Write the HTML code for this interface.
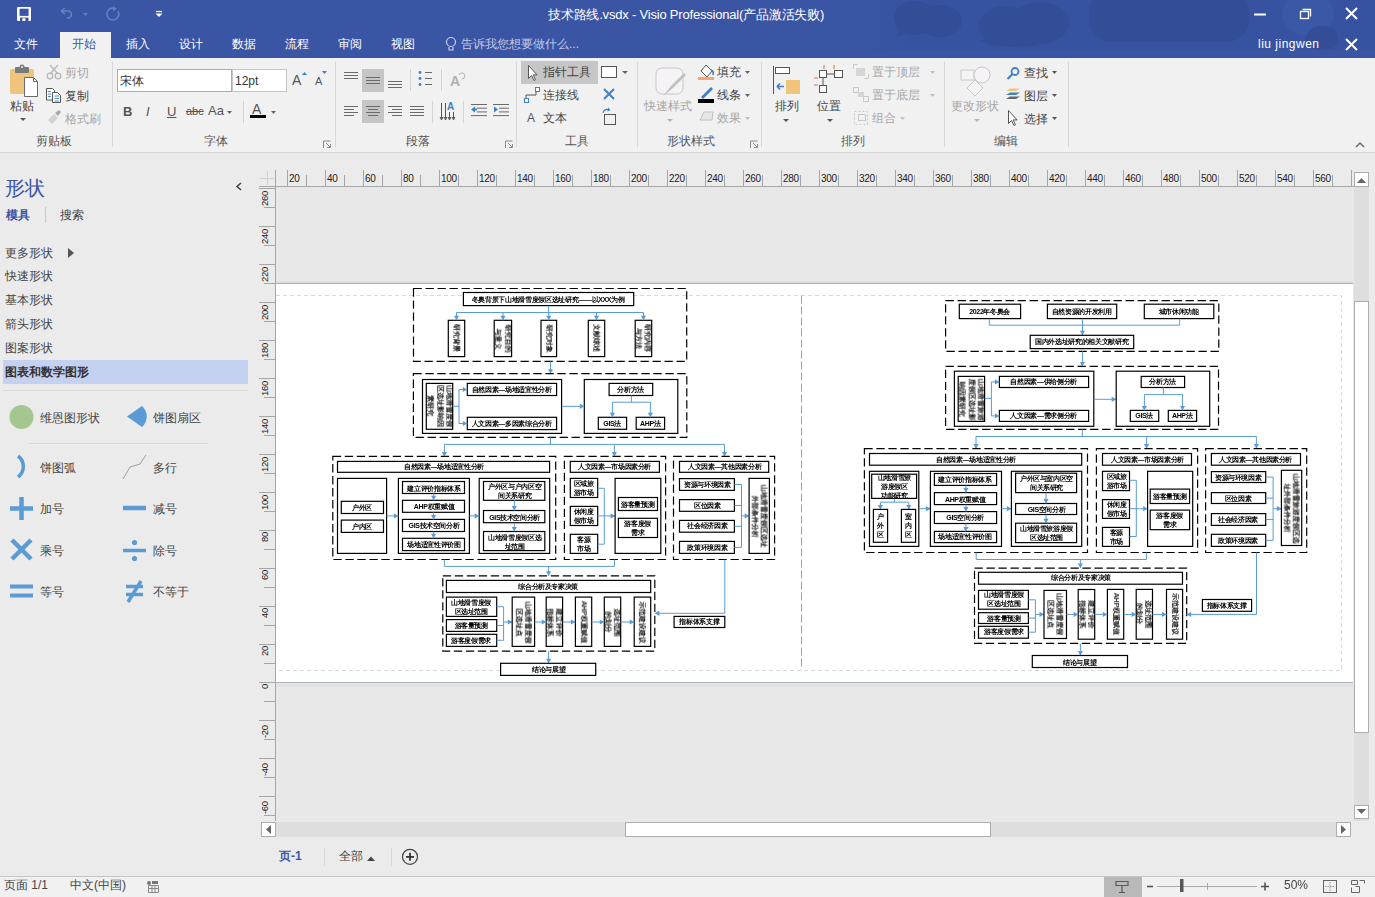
<!DOCTYPE html><html><head><meta charset="utf-8"><style>
html,body{margin:0;padding:0;width:1375px;height:897px;overflow:hidden;background:#ebebeb;font-family:"Liberation Sans", sans-serif;}
.t{position:absolute;white-space:nowrap;font-weight:500;}
.r{position:absolute;box-sizing:border-box;}
svg{position:absolute;overflow:visible;}

</style></head><body>
<div class="r" style="left:0px;top:0px;width:1375px;height:58px;background:#3a55a4"></div>
<svg style="left:0px;top:0px" width="1375" height="58" viewBox="0 0 1375 58"><defs><linearGradient id="cg" x1="0" x2="1" y1="0" y2="0"><stop offset="0" stop-color="#3752a0" stop-opacity="0"/><stop offset="0.12" stop-color="#3752a0" stop-opacity="1"/></linearGradient></defs><rect x="850" y="0" width="525" height="50" fill="url(#cg)"/><ellipse cx="915" cy="18" rx="21" ry="17" fill="#334e97"/><ellipse cx="940" cy="21" rx="22" ry="16" fill="#334e97"/><path d="M895 37 l8 -10 h20z" fill="#334e97"/><ellipse cx="1005" cy="26" rx="26" ry="20" fill="#334e97"/><ellipse cx="1040" cy="23" rx="29" ry="21" fill="#334e97"/><path d="M979 40 q20 10 60 6 l-30 -15z" fill="#334e97"/><rect x="1089" y="-10" width="160" height="52" rx="22" fill="#334e97"/><path d="M1190 42 q40 0 59 -16 l-40 0z" fill="#334e97"/><ellipse cx="1308" cy="14" rx="26" ry="22" fill="#3b58a7"/><ellipse cx="1322" cy="38" rx="16" ry="12" fill="#334e97"/></svg>
<svg style="left:0px;top:0px" width="1375" height="897" viewBox="0 0 1375 897"><rect x="17" y="7" width="14" height="14" rx="1.2" fill="#fff"/><rect x="19.6" y="8.7" width="9" height="7.2" fill="#3a55a4"/><rect x="20" y="17.6" width="8.5" height="3.4" fill="#3a55a4"/><rect x="22.4" y="18.2" width="3" height="2.8" fill="#fff"/><path d="M61 11 l4 -3 M61 11 l4 3 M61 11 h7 a3.5 3.5 0 0 1 0 7 h-1" fill="none" stroke="#6b80bf" stroke-width="1.5"/><path d="M83 13 h5 l-2.5 3z" fill="#6b80bf"/><path d="M113 8 a6 6 0 1 0 5 3" fill="none" stroke="#6b80bf" stroke-width="1.5"/><path d="M113 6 l0 5 l4 -2z" fill="#6b80bf"/><path d="M156 11.5 h6" stroke="#fff" stroke-width="1.2"/><path d="M155.5 13.5 h7 l-3.5 3.5z" fill="#fff"/></svg>
<div class="t" style="left:548px;top:7px;font-size:13px;line-height:15px;color:#fff;letter-spacing:-0.2px">技术路线.vsdx - Visio Professional(产品激活失败)</div>
<svg style="left:0px;top:0px" width="1375" height="897" viewBox="0 0 1375 897"><path d="M1254 14.5 h12" stroke="#fff" stroke-width="2"/><rect x="1300.5" y="11.5" width="8" height="7" fill="none" stroke="#fff" stroke-width="1.3"/><path d="M1302.5 9.5 h8 v7" fill="none" stroke="#fff" stroke-width="1.3"/><path d="M1346 8 l11 11 M1357 8 l-11 11" stroke="#fff" stroke-width="2"/><path d="M1346 39 l11 11 M1357 39 l-11 11" stroke="#fff" stroke-width="2"/><circle cx="451" cy="42" r="4.5" fill="none" stroke="#c9d1ea" stroke-width="1.2"/><path d="M449 47 v3 h4 v-3" fill="none" stroke="#c9d1ea" stroke-width="1.2"/></svg>
<div class="r" style="left:60px;top:32px;width:51px;height:26px;background:#f1f1f1"></div>
<div class="t" style="left:14px;top:37px;font-size:12px;line-height:14px;color:#fff;">文件</div>
<div class="t" style="left:72px;top:37px;font-size:12px;line-height:14px;color:#3a55a4;">开始</div>
<div class="t" style="left:126px;top:37px;font-size:12px;line-height:14px;color:#fff;">插入</div>
<div class="t" style="left:179px;top:37px;font-size:12px;line-height:14px;color:#fff;">设计</div>
<div class="t" style="left:232px;top:37px;font-size:12px;line-height:14px;color:#fff;">数据</div>
<div class="t" style="left:285px;top:37px;font-size:12px;line-height:14px;color:#fff;">流程</div>
<div class="t" style="left:338px;top:37px;font-size:12px;line-height:14px;color:#fff;">审阅</div>
<div class="t" style="left:391px;top:37px;font-size:12px;line-height:14px;color:#fff;">视图</div>
<div class="t" style="left:461px;top:37px;font-size:12px;line-height:14px;color:#c3cbe6;">告诉我您想要做什么...</div>
<div class="t" style="left:1258px;top:37px;font-size:12px;line-height:14px;color:#fff;letter-spacing:0.5px">liu jingwen</div>
<div class="r" style="left:0px;top:58px;width:1375px;height:95px;background:#f1f1f1;border-bottom:1px solid #d5d5d5"></div>
<svg style="left:0px;top:0px" width="1375" height="897" viewBox="0 0 1375 897"><path d="M112.5 62 v85" stroke="#d8d8d8" stroke-width="1"/><path d="M335.5 62 v85" stroke="#d8d8d8" stroke-width="1"/><path d="M516.5 62 v85" stroke="#d8d8d8" stroke-width="1"/><path d="M637.5 62 v85" stroke="#d8d8d8" stroke-width="1"/><path d="M761.5 62 v85" stroke="#d8d8d8" stroke-width="1"/><path d="M944.5 62 v85" stroke="#d8d8d8" stroke-width="1"/><path d="M1068.5 62 v85" stroke="#d8d8d8" stroke-width="1"/><path d="M323.5 148 v-7 h7" fill="none" stroke="#8a8a8a" stroke-width="1"/><path d="M326 143 l4 4 M330.5 144 v3.5 h-3.5" fill="none" stroke="#8a8a8a" stroke-width="1"/><path d="M505.5 148 v-7 h7" fill="none" stroke="#8a8a8a" stroke-width="1"/><path d="M508 143 l4 4 M512.5 144 v3.5 h-3.5" fill="none" stroke="#8a8a8a" stroke-width="1"/><path d="M750.5 148 v-7 h7" fill="none" stroke="#8a8a8a" stroke-width="1"/><path d="M753 143 l4 4 M757.5 144 v3.5 h-3.5" fill="none" stroke="#8a8a8a" stroke-width="1"/><path d="M1356 147 l4 -4 l4 4" fill="none" stroke="#666" stroke-width="1.4"/><rect x="10" y="69" width="24" height="25" rx="2" fill="#eec57a"/><rect x="15" y="67" width="14" height="6" rx="1" fill="#7a7a7a"/><circle cx="22" cy="67" r="2.5" fill="#7a7a7a"/><circle cx="22" cy="67" r="1" fill="#f1f1f1"/><path d="M24.5 77.5 h9 l4 4 v15 h-13z" fill="#fff" stroke="#6a6a6a" stroke-width="1"/><path d="M33.5 77.5 v4 h4" fill="none" stroke="#6a6a6a" stroke-width="1"/><path d="M20 118 h6 l-3 3z" fill="#555"/><path d="M50 65 l8 9 M58 65 l-8 9" stroke="#b8b8b8" stroke-width="1.3"/><circle cx="50" cy="76" r="2.8" fill="none" stroke="#b8b8b8" stroke-width="1.3"/><circle cx="58" cy="76" r="2.8" fill="none" stroke="#b8b8b8" stroke-width="1.3"/><path d="M46.5 88.5 h6 l2 2 v9.5 h-8z" fill="#fff" stroke="#555" stroke-width="1"/><path d="M52.5 92.5 h5 l3 3 v7 h-8z" fill="#fff" stroke="#555" stroke-width="1"/><path d="M48 91.5 h3 M48 94 h3 M48 96.5 h3 M54.5 96 h4.5 M54.5 98.5 h4.5 M54.5 101 h4.5" stroke="#3f7fc5" stroke-width="0.9"/><path d="M48 120 l6 -6 l4 4 l-6 6z" fill="#d2d2d2"/><path d="M55 113 l4 -3 l2 2 l-3 4z" fill="#a8a8a8"/><path d="M221 80 h6 l-3 3z" fill="#444"/><path d="M276 80 h6 l-3 3z" fill="#777"/><path d="M302 75 l2.5 -3 l2.5 3z" fill="#3f7fc5"/><path d="M322 71 h5 l-2.5 3z" fill="#3f7fc5"/><path d="M227 111 h5 l-2.5 3z" fill="#666"/><path d="M243.5 101 v22" stroke="#d5d5d5"/><rect x="250" y="115" width="16" height="3" fill="#000"/><path d="M271 111 h5 l-2.5 3z" fill="#666"/><rect x="362" y="69" width="22" height="23" fill="#c5c5c5"/><rect x="362" y="100" width="22" height="23" fill="#c5c5c5"/><path d="M344 72.5 h14" stroke="#6a6a6a" stroke-width="1"/><path d="M344 75.5 h14" stroke="#6a6a6a" stroke-width="1"/><path d="M344 78.5 h14" stroke="#6a6a6a" stroke-width="1"/><path d="M366 77.5 h14" stroke="#6a6a6a" stroke-width="1"/><path d="M366 80.5 h14" stroke="#6a6a6a" stroke-width="1"/><path d="M366 83.5 h14" stroke="#6a6a6a" stroke-width="1"/><path d="M388 81.5 h14" stroke="#6a6a6a" stroke-width="1"/><path d="M388 84.5 h14" stroke="#6a6a6a" stroke-width="1"/><path d="M388 87.5 h14" stroke="#6a6a6a" stroke-width="1"/><path d="M410.5 69 v22 M441.5 69 v22 M432.5 101 v22 M463.5 101 v22" stroke="#d5d5d5"/><circle cx="420" cy="72.5" r="1.4" fill="#3f7fc5"/><circle cx="420" cy="78.5" r="1.4" fill="#3f7fc5"/><circle cx="420" cy="84.5" r="1.4" fill="#3f7fc5"/><path d="M425 72.5 h7" stroke="#6a6a6a" stroke-width="1"/><path d="M425 78.5 h7" stroke="#6a6a6a" stroke-width="1"/><path d="M425 84.5 h7" stroke="#6a6a6a" stroke-width="1"/><path d="M459 75 a3 3 0 1 1 3 4" fill="none" stroke="#b0b0b0" stroke-width="1"/><path d="M344 106.5 h14" stroke="#6a6a6a" stroke-width="1"/><path d="M344 109.5 h10" stroke="#6a6a6a" stroke-width="1"/><path d="M344 112.5 h14" stroke="#6a6a6a" stroke-width="1"/><path d="M344 115.5 h10" stroke="#6a6a6a" stroke-width="1"/><path d="M366 106.5 h14" stroke="#6a6a6a" stroke-width="1"/><path d="M368 109.5 h10" stroke="#6a6a6a" stroke-width="1"/><path d="M366 112.5 h14" stroke="#6a6a6a" stroke-width="1"/><path d="M368 115.5 h10" stroke="#6a6a6a" stroke-width="1"/><path d="M388 106.5 h14" stroke="#6a6a6a" stroke-width="1"/><path d="M392 109.5 h10" stroke="#6a6a6a" stroke-width="1"/><path d="M388 112.5 h14" stroke="#6a6a6a" stroke-width="1"/><path d="M392 115.5 h10" stroke="#6a6a6a" stroke-width="1"/><path d="M410 106.5 h14" stroke="#6a6a6a" stroke-width="1"/><path d="M410 109.5 h14" stroke="#6a6a6a" stroke-width="1"/><path d="M410 112.5 h14" stroke="#6a6a6a" stroke-width="1"/><path d="M410 115.5 h14" stroke="#6a6a6a" stroke-width="1"/><path d="M441.5 103 v16 M445.5 103 v16 M449.5 112 v7 M453.5 112 v7" stroke="#555" stroke-width="1"/><path d="M440 117 l1.5 3 l1.5 -3 M444 117 l1.5 3 l1.5 -3 M448 117 l1.5 3 l1.5 -3 M452 117 l1.5 3 l1.5 -3" fill="#555" stroke="#555" stroke-width=".8"/><path d="M471 104.5 h16" stroke="#6a6a6a" stroke-width="1"/><path d="M477 108.2 h10" stroke="#6a6a6a" stroke-width="1"/><path d="M477 111.9 h10" stroke="#6a6a6a" stroke-width="1"/><path d="M471 115.6 h16" stroke="#6a6a6a" stroke-width="1"/><path d="M471 109.5 l4 -3 v6z" fill="#3f7fc5"/><path d="M473 109.5 h4" stroke="#3f7fc5" stroke-width="2"/><path d="M493 104.5 h16" stroke="#6a6a6a" stroke-width="1"/><path d="M499 108.2 h10" stroke="#6a6a6a" stroke-width="1"/><path d="M499 111.9 h10" stroke="#6a6a6a" stroke-width="1"/><path d="M493 115.6 h16" stroke="#6a6a6a" stroke-width="1"/><path d="M498 109.5 l-4 -3 v6z" fill="#3f7fc5"/><path d="M494 109.5 h2" stroke="#3f7fc5" stroke-width="2"/><rect x="521" y="61" width="77" height="23" fill="#c6c6c6"/><path d="M528.5 65.5 v13 l3 -3 l2.5 5 l1.5 -.8 l-2.4 -4.8 h4z" fill="#fff" stroke="#555" stroke-width="1"/><rect x="601.5" y="66.5" width="15" height="11" fill="#fff" stroke="#555" stroke-width="1"/><path d="M622 71 h6 l-3 3z" fill="#666"/><path d="M526 100 v-5 h10 v-5" fill="none" stroke="#555" stroke-width="1"/><rect x="524.5" y="98.5" width="4" height="4" fill="#fff" stroke="#3f7fc5"/><rect x="535.5" y="87.5" width="4" height="4" fill="#fff" stroke="#3f7fc5"/><path d="M604 89 l10 10 M614 89 l-10 10" stroke="#3f7fc5" stroke-width="2"/><rect x="604.5" y="114.5" width="11" height="10" fill="none" stroke="#555" stroke-width="1"/><path d="M603 113 a4 4 0 0 1 6 -3" fill="none" stroke="#3f7fc5" stroke-width="1.2"/><path d="M608 107.5 l2.5 2.5 l-3 1.5z" fill="#3f7fc5"/><rect x="656" y="68" width="27" height="26" rx="6" fill="#f6f3f6" stroke="#c8c8c8" stroke-width="1"/><path d="M663 96 l8 -10 l13 -13 l2 2 l-13 13z" fill="#c0c0c0"/><path d="M667 119 h6 l-3 3z" fill="#b5b5b5"/><path d="M701 71 l5 -6 l6 6 l-5 6z" fill="#fff" stroke="#555" stroke-width="1"/><path d="M711 70 q3 1 2 5" fill="none" stroke="#3f7fc5" stroke-width="1.6"/><rect x="698" y="77" width="16" height="3" fill="#f4a66e"/><path d="M745 71 h5 l-2.5 3z" fill="#666"/><path d="M701 97 l10 -10 l2 2 l-10 10z" fill="#3f7fc5"/><rect x="698" y="99" width="16" height="4" fill="#000"/><path d="M745 94 h5 l-2.5 3z" fill="#666"/><path d="M700 120 l4 -8 h9 l-1 8z" fill="#e6e6e6" stroke="#c0c0c0" stroke-width="1"/><path d="M745 117 h5 l-2.5 3z" fill="#bbb"/><path d="M773.5 66 v28" stroke="#555" stroke-width="1"/><rect x="775.5" y="67.5" width="14" height="6" fill="#fff" stroke="#555"/><rect x="786" y="80" width="14" height="14" fill="#eec57a"/><path d="M777 86.5 h7 M777 86.5 l3 -3 M777 86.5 l3 3" fill="none" stroke="#3f7fc5" stroke-width="1.6"/><path d="M783 119 h6 l-3 3z" fill="#555"/><rect x="819.5" y="70.5" width="7" height="7" fill="#fff" stroke="#555"/><rect x="834.5" y="70.5" width="8" height="7" fill="#fff" stroke="#555"/><rect x="819.5" y="85.5" width="7" height="7" fill="#fff" stroke="#555"/><path d="M827 74 h7 M823 78 v7" stroke="#555"/><path d="M824 65 v4 M834 65 v4 M814 78 h4 M814 85 h4" stroke="#e06a3a" stroke-width="1"/><path d="M827 119 h6 l-3 3z" fill="#555"/><path d="M853.5 69 v-4.5 h4 M868.5 74 v4.5 h-4" fill="none" stroke="#c8c8c8"/><rect x="856" y="68" width="9" height="8" fill="#d6d6d6"/><path d="M930 71 h5 l-2.5 3z" fill="#c0c0c0"/><rect x="853.5" y="87.5" width="5" height="5" fill="none" stroke="#c8c8c8"/><rect x="858" y="92" width="6" height="5" fill="#d6d6d6"/><rect x="863.5" y="96.5" width="5" height="5" fill="none" stroke="#c8c8c8"/><path d="M930 94 h5 l-2.5 3z" fill="#c0c0c0"/><rect x="854.5" y="111.5" width="13" height="13" fill="none" stroke="#c8c8c8" stroke-dasharray="2 2"/><rect x="858.5" y="114.5" width="7" height="6" fill="none" stroke="#c8c8c8"/><path d="M900 117 h5 l-2.5 3z" fill="#c0c0c0"/><path d="M961 70 h13 v10 h-13z" fill="#f6f3f6" stroke="#c8c8c8"/><circle cx="982" cy="75" r="8" fill="#f6f3f6" stroke="#c8c8c8"/><path d="M975 80 l8 8 l-8 8 l-8 -8z" fill="#f6f3f6" stroke="#c8c8c8"/><path d="M974 119 h6 l-3 3z" fill="#b5b5b5"/><circle cx="1015" cy="71.5" r="3.5" fill="none" stroke="#3f7fc5" stroke-width="1.8"/><path d="M1012.5 74 l-5 5" stroke="#3f7fc5" stroke-width="2.2"/><path d="M1052 71 h5 l-2.5 3z" fill="#555"/><path d="M1006 91 l4 -2.5 h10 l-4 2.5z" fill="#eec57a"/><path d="M1006 95 l4 -2.5 h10 l-4 2.5z" fill="#3f7fc5"/><path d="M1006 99 l4 -2.5 h10 l-4 2.5z" fill="#666"/><path d="M1052 94 h5 l-2.5 3z" fill="#555"/><path d="M1008.5 110.5 v13 l3 -3 l2.5 5 l1.5 -.8 l-2.4 -4.8 h4z" fill="#fff" stroke="#555" stroke-width="1"/><path d="M1052 117 h5 l-2.5 3z" fill="#555"/></svg>
<div class="t" style="left:36px;top:134px;font-size:12px;line-height:14px;color:#555;">剪贴板</div>
<div class="t" style="left:204px;top:134px;font-size:12px;line-height:14px;color:#555;">字体</div>
<div class="t" style="left:406px;top:134px;font-size:12px;line-height:14px;color:#555;">段落</div>
<div class="t" style="left:565px;top:134px;font-size:12px;line-height:14px;color:#555;">工具</div>
<div class="t" style="left:667px;top:134px;font-size:12px;line-height:14px;color:#555;">形状样式</div>
<div class="t" style="left:841px;top:134px;font-size:12px;line-height:14px;color:#555;">排列</div>
<div class="t" style="left:994px;top:134px;font-size:12px;line-height:14px;color:#555;">编辑</div>
<div class="t" style="left:10px;top:99px;font-size:12px;line-height:14px;color:#444;">粘贴</div>
<div class="t" style="left:65px;top:66px;font-size:12px;line-height:14px;color:#a6a6a6;">剪切</div>
<div class="t" style="left:65px;top:89px;font-size:12px;line-height:14px;color:#444;">复制</div>
<div class="t" style="left:65px;top:112px;font-size:12px;line-height:14px;color:#a6a6a6;">格式刷</div>
<div class="r" style="left:117px;top:69px;width:115px;height:23px;background:#fff;border:1px solid #ababab"></div>
<div class="r" style="left:232px;top:69px;width:55px;height:23px;background:#fff;border:1px solid #c6c6c6"></div>
<div class="t" style="left:120px;top:74px;font-size:12px;line-height:14px;color:#333;">宋体</div>
<div class="t" style="left:235px;top:74px;font-size:12px;line-height:14px;color:#333;">12pt</div>
<div class="t" style="left:292px;top:72px;font-size:14px;line-height:16px;color:#555;">A</div>
<div class="t" style="left:315px;top:75px;font-size:11px;line-height:13px;color:#555;">A</div>
<div class="t" style="left:123px;top:104px;font-size:13px;line-height:15px;color:#555;"><b>B</b></div>
<div class="t" style="left:146px;top:104px;font-size:13px;line-height:15px;color:#555;font-family:"Liberation Serif",serif"><i>I</i></div>
<div class="t" style="left:167px;top:104px;font-size:13px;line-height:15px;color:#555;"><u>U</u></div>
<div class="t" style="left:186px;top:105px;font-size:11px;line-height:13px;color:#555;"><s>abc</s></div>
<div class="t" style="left:208px;top:103px;font-size:13px;line-height:15px;color:#555;">Aa</div>
<div class="t" style="left:252px;top:101px;font-size:14px;line-height:16px;color:#555;">A</div>
<div class="t" style="left:450px;top:73px;font-size:14px;line-height:16px;color:#b0b0b0;"><b>A</b></div>
<div class="t" style="left:447px;top:101px;font-size:10px;line-height:12px;color:#3f7fc5;"><b>A</b></div>
<div class="t" style="left:543px;top:65px;font-size:12px;line-height:14px;color:#444;">指针工具</div>
<div class="t" style="left:543px;top:88px;font-size:12px;line-height:14px;color:#444;">连接线</div>
<div class="t" style="left:527px;top:111px;font-size:12px;line-height:14px;color:#555;">A</div>
<div class="t" style="left:543px;top:111px;font-size:12px;line-height:14px;color:#444;">文本</div>
<div class="t" style="left:644px;top:99px;font-size:12px;line-height:14px;color:#a6a6a6;">快速样式</div>
<div class="t" style="left:717px;top:65px;font-size:12px;line-height:14px;color:#444;">填充</div>
<div class="t" style="left:717px;top:88px;font-size:12px;line-height:14px;color:#444;">线条</div>
<div class="t" style="left:717px;top:111px;font-size:12px;line-height:14px;color:#a6a6a6;">效果</div>
<div class="t" style="left:775px;top:99px;font-size:12px;line-height:14px;color:#444;">排列</div>
<div class="t" style="left:817px;top:99px;font-size:12px;line-height:14px;color:#444;">位置</div>
<div class="t" style="left:872px;top:65px;font-size:12px;line-height:14px;color:#a6a6a6;">置于顶层</div>
<div class="t" style="left:872px;top:88px;font-size:12px;line-height:14px;color:#a6a6a6;">置于底层</div>
<div class="t" style="left:872px;top:111px;font-size:12px;line-height:14px;color:#a6a6a6;">组合</div>
<div class="t" style="left:951px;top:99px;font-size:12px;line-height:14px;color:#a6a6a6;">更改形状</div>
<div class="t" style="left:1024px;top:66px;font-size:12px;line-height:14px;color:#444;">查找</div>
<div class="t" style="left:1024px;top:89px;font-size:12px;line-height:14px;color:#444;">图层</div>
<div class="t" style="left:1024px;top:112px;font-size:12px;line-height:14px;color:#444;">选择</div>
<div class="t" style="left:5px;top:177px;font-size:20px;line-height:22px;color:#3a55a4;">形状</div>
<svg style="left:0px;top:0px" width="1375" height="897" viewBox="0 0 1375 897"><path d="M241 183 l-4 3.5 l4 3.5" fill="none" stroke="#444" stroke-width="1.6"/><path d="M45.5 207 v16" stroke="#c8c8c8"/><path d="M68 248 l6 5 l-6 5z" fill="#555"/><path d="M3 390.5 h245" stroke="#dcdcdc"/><path d="M29 443.5 h179" stroke="#d9d9d9"/></svg>
<div class="t" style="left:6px;top:208px;font-size:12px;line-height:14px;color:#3a55a4;"><b>模具</b></div>
<div class="t" style="left:60px;top:208px;font-size:12px;line-height:14px;color:#444;">搜索</div>
<div class="t" style="left:5px;top:246px;font-size:12px;line-height:14px;color:#444;">更多形状</div>
<div class="t" style="left:5px;top:269px;font-size:12px;line-height:14px;color:#444;">快速形状</div>
<div class="t" style="left:5px;top:293px;font-size:12px;line-height:14px;color:#444;">基本形状</div>
<div class="t" style="left:5px;top:317px;font-size:12px;line-height:14px;color:#444;">箭头形状</div>
<div class="t" style="left:5px;top:341px;font-size:12px;line-height:14px;color:#444;">图案形状</div>
<div class="r" style="left:3px;top:360px;width:245px;height:24px;background:#c5d1f1"></div>
<div class="t" style="left:5px;top:365px;font-size:12px;line-height:14px;color:#333;"><b>图表和数学图形</b></div>
<svg style="left:0px;top:0px" width="1375" height="897" viewBox="0 0 1375 897"><circle cx="21.5" cy="417" r="12" fill="#a5c78f"/><path d="M142 406 a14 14 0 0 1 0 21 l-15 -10.5z" fill="#5b9bd5"/><path d="M18 456 a13 13 0 0 1 0 21" fill="none" stroke="#5b9bd5" stroke-width="3.5"/><path d="M123 479 l7 -12 l10 -3 l6 -9" fill="none" stroke="#a0a0a0" stroke-width="1"/><path d="M10 508.5 h23 M21.5 497 v23" stroke="#5b9bd5" stroke-width="4.5"/><path d="M123 508 h23" stroke="#5b9bd5" stroke-width="4.5"/><path d="M12 540 l19 19 M31 540 l-19 19" stroke="#5b9bd5" stroke-width="4.5"/><path d="M123 550.5 h23" stroke="#5b9bd5" stroke-width="3.5"/><circle cx="134.5" cy="542.5" r="2.6" fill="#5b9bd5"/><circle cx="134.5" cy="558.5" r="2.6" fill="#5b9bd5"/><path d="M10 586.5 h23 M10 595.5 h23" stroke="#5b9bd5" stroke-width="4"/><path d="M126 586.5 h17 M126 594.5 h17" stroke="#5b9bd5" stroke-width="3.5"/><path d="M141 581 l-13 21" stroke="#5b9bd5" stroke-width="3.5"/></svg>
<div class="t" style="left:40px;top:411px;font-size:12px;line-height:14px;color:#444;">维恩图形状</div>
<div class="t" style="left:153px;top:411px;font-size:12px;line-height:14px;color:#444;">饼图扇区</div>
<div class="t" style="left:40px;top:461px;font-size:12px;line-height:14px;color:#444;">饼图弧</div>
<div class="t" style="left:153px;top:461px;font-size:12px;line-height:14px;color:#444;">多行</div>
<div class="t" style="left:40px;top:502px;font-size:12px;line-height:14px;color:#444;">加号</div>
<div class="t" style="left:153px;top:502px;font-size:12px;line-height:14px;color:#444;">减号</div>
<div class="t" style="left:40px;top:544px;font-size:12px;line-height:14px;color:#444;">乘号</div>
<div class="t" style="left:153px;top:544px;font-size:12px;line-height:14px;color:#444;">除号</div>
<div class="t" style="left:40px;top:585px;font-size:12px;line-height:14px;color:#444;">等号</div>
<div class="t" style="left:153px;top:585px;font-size:12px;line-height:14px;color:#444;">不等于</div>
<div class="r" style="left:276px;top:187px;width:1078px;height:634px;background:#e8e8e8"></div>
<div class="r" style="left:276px;top:283px;width:1077px;height:400px;background:#fff"></div>
<div class="t" style="left:289px;top:174px;font-size:10px;line-height:12px;color:#222;line-height:10px;letter-spacing:-0.3px">20</div>
<div class="t" style="left:327px;top:174px;font-size:10px;line-height:12px;color:#222;line-height:10px;letter-spacing:-0.3px">40</div>
<div class="t" style="left:365px;top:174px;font-size:10px;line-height:12px;color:#222;line-height:10px;letter-spacing:-0.3px">60</div>
<div class="t" style="left:403px;top:174px;font-size:10px;line-height:12px;color:#222;line-height:10px;letter-spacing:-0.3px">80</div>
<div class="t" style="left:441px;top:174px;font-size:10px;line-height:12px;color:#222;line-height:10px;letter-spacing:-0.3px">100</div>
<div class="t" style="left:479px;top:174px;font-size:10px;line-height:12px;color:#222;line-height:10px;letter-spacing:-0.3px">120</div>
<div class="t" style="left:517px;top:174px;font-size:10px;line-height:12px;color:#222;line-height:10px;letter-spacing:-0.3px">140</div>
<div class="t" style="left:555px;top:174px;font-size:10px;line-height:12px;color:#222;line-height:10px;letter-spacing:-0.3px">160</div>
<div class="t" style="left:593px;top:174px;font-size:10px;line-height:12px;color:#222;line-height:10px;letter-spacing:-0.3px">180</div>
<div class="t" style="left:631px;top:174px;font-size:10px;line-height:12px;color:#222;line-height:10px;letter-spacing:-0.3px">200</div>
<div class="t" style="left:669px;top:174px;font-size:10px;line-height:12px;color:#222;line-height:10px;letter-spacing:-0.3px">220</div>
<div class="t" style="left:707px;top:174px;font-size:10px;line-height:12px;color:#222;line-height:10px;letter-spacing:-0.3px">240</div>
<div class="t" style="left:745px;top:174px;font-size:10px;line-height:12px;color:#222;line-height:10px;letter-spacing:-0.3px">260</div>
<div class="t" style="left:783px;top:174px;font-size:10px;line-height:12px;color:#222;line-height:10px;letter-spacing:-0.3px">280</div>
<div class="t" style="left:821px;top:174px;font-size:10px;line-height:12px;color:#222;line-height:10px;letter-spacing:-0.3px">300</div>
<div class="t" style="left:859px;top:174px;font-size:10px;line-height:12px;color:#222;line-height:10px;letter-spacing:-0.3px">320</div>
<div class="t" style="left:897px;top:174px;font-size:10px;line-height:12px;color:#222;line-height:10px;letter-spacing:-0.3px">340</div>
<div class="t" style="left:935px;top:174px;font-size:10px;line-height:12px;color:#222;line-height:10px;letter-spacing:-0.3px">360</div>
<div class="t" style="left:973px;top:174px;font-size:10px;line-height:12px;color:#222;line-height:10px;letter-spacing:-0.3px">380</div>
<div class="t" style="left:1011px;top:174px;font-size:10px;line-height:12px;color:#222;line-height:10px;letter-spacing:-0.3px">400</div>
<div class="t" style="left:1049px;top:174px;font-size:10px;line-height:12px;color:#222;line-height:10px;letter-spacing:-0.3px">420</div>
<div class="t" style="left:1087px;top:174px;font-size:10px;line-height:12px;color:#222;line-height:10px;letter-spacing:-0.3px">440</div>
<div class="t" style="left:1125px;top:174px;font-size:10px;line-height:12px;color:#222;line-height:10px;letter-spacing:-0.3px">460</div>
<div class="t" style="left:1163px;top:174px;font-size:10px;line-height:12px;color:#222;line-height:10px;letter-spacing:-0.3px">480</div>
<div class="t" style="left:1201px;top:174px;font-size:10px;line-height:12px;color:#222;line-height:10px;letter-spacing:-0.3px">500</div>
<div class="t" style="left:1239px;top:174px;font-size:10px;line-height:12px;color:#222;line-height:10px;letter-spacing:-0.3px">520</div>
<div class="t" style="left:1277px;top:174px;font-size:10px;line-height:12px;color:#222;line-height:10px;letter-spacing:-0.3px">540</div>
<div class="t" style="left:1315px;top:174px;font-size:10px;line-height:12px;color:#222;line-height:10px;letter-spacing:-0.3px">560</div>
<div class="t" style="left:260px;top:797px;width:9px;height:17px;font-size:9.5px;line-height:10px;color:#222;"><div style="position:absolute;left:0;top:17px;transform-origin:0 0;transform:rotate(-90deg);letter-spacing:-0.3px">-60</div></div>
<div class="t" style="left:260px;top:759px;width:9px;height:17px;font-size:9.5px;line-height:10px;color:#222;"><div style="position:absolute;left:0;top:17px;transform-origin:0 0;transform:rotate(-90deg);letter-spacing:-0.3px">-40</div></div>
<div class="t" style="left:260px;top:721px;width:9px;height:17px;font-size:9.5px;line-height:10px;color:#222;"><div style="position:absolute;left:0;top:17px;transform-origin:0 0;transform:rotate(-90deg);letter-spacing:-0.3px">-20</div></div>
<div class="t" style="left:260px;top:683px;width:9px;height:6px;font-size:9.5px;line-height:10px;color:#222;"><div style="position:absolute;left:0;top:6px;transform-origin:0 0;transform:rotate(-90deg);letter-spacing:-0.3px">0</div></div>
<div class="t" style="left:260px;top:645px;width:9px;height:11px;font-size:9.5px;line-height:10px;color:#222;"><div style="position:absolute;left:0;top:11px;transform-origin:0 0;transform:rotate(-90deg);letter-spacing:-0.3px">20</div></div>
<div class="t" style="left:260px;top:607px;width:9px;height:11px;font-size:9.5px;line-height:10px;color:#222;"><div style="position:absolute;left:0;top:11px;transform-origin:0 0;transform:rotate(-90deg);letter-spacing:-0.3px">40</div></div>
<div class="t" style="left:260px;top:569px;width:9px;height:11px;font-size:9.5px;line-height:10px;color:#222;"><div style="position:absolute;left:0;top:11px;transform-origin:0 0;transform:rotate(-90deg);letter-spacing:-0.3px">60</div></div>
<div class="t" style="left:260px;top:531px;width:9px;height:11px;font-size:9.5px;line-height:10px;color:#222;"><div style="position:absolute;left:0;top:11px;transform-origin:0 0;transform:rotate(-90deg);letter-spacing:-0.3px">80</div></div>
<div class="t" style="left:260px;top:493px;width:9px;height:17px;font-size:9.5px;line-height:10px;color:#222;"><div style="position:absolute;left:0;top:17px;transform-origin:0 0;transform:rotate(-90deg);letter-spacing:-0.3px">100</div></div>
<div class="t" style="left:260px;top:455px;width:9px;height:17px;font-size:9.5px;line-height:10px;color:#222;"><div style="position:absolute;left:0;top:17px;transform-origin:0 0;transform:rotate(-90deg);letter-spacing:-0.3px">120</div></div>
<div class="t" style="left:260px;top:417px;width:9px;height:17px;font-size:9.5px;line-height:10px;color:#222;"><div style="position:absolute;left:0;top:17px;transform-origin:0 0;transform:rotate(-90deg);letter-spacing:-0.3px">140</div></div>
<div class="t" style="left:260px;top:379px;width:9px;height:17px;font-size:9.5px;line-height:10px;color:#222;"><div style="position:absolute;left:0;top:17px;transform-origin:0 0;transform:rotate(-90deg);letter-spacing:-0.3px">160</div></div>
<div class="t" style="left:260px;top:341px;width:9px;height:17px;font-size:9.5px;line-height:10px;color:#222;"><div style="position:absolute;left:0;top:17px;transform-origin:0 0;transform:rotate(-90deg);letter-spacing:-0.3px">180</div></div>
<div class="t" style="left:260px;top:303px;width:9px;height:17px;font-size:9.5px;line-height:10px;color:#222;"><div style="position:absolute;left:0;top:17px;transform-origin:0 0;transform:rotate(-90deg);letter-spacing:-0.3px">200</div></div>
<div class="t" style="left:260px;top:265px;width:9px;height:17px;font-size:9.5px;line-height:10px;color:#222;"><div style="position:absolute;left:0;top:17px;transform-origin:0 0;transform:rotate(-90deg);letter-spacing:-0.3px">220</div></div>
<div class="t" style="left:260px;top:227px;width:9px;height:17px;font-size:9.5px;line-height:10px;color:#222;"><div style="position:absolute;left:0;top:17px;transform-origin:0 0;transform:rotate(-90deg);letter-spacing:-0.3px">240</div></div>
<div class="t" style="left:260px;top:189px;width:9px;height:17px;font-size:9.5px;line-height:10px;color:#222;"><div style="position:absolute;left:0;top:17px;transform-origin:0 0;transform:rotate(-90deg);letter-spacing:-0.3px">260</div></div>
<svg style="left:0px;top:0px" width="1375" height="897" viewBox="0 0 1375 897"><path d="M276 283.5 h1077" stroke="#a9b0bb" stroke-width="1"/><path d="M276 682.5 h1077" stroke="#a9b0bb" stroke-width="1"/><rect x="276" y="684" width="1077" height="3" fill="#dcdcdc" opacity=".6"/><rect x="276" y="281" width="1077" height="2" fill="#dedbd8" opacity=".8"/><path d="M276 295.5 H1341.5 V670.5 H276" fill="none" stroke="#d9d9d9" stroke-width="1" stroke-dasharray="4 3"/><path d="M801.5 295.5 V670" stroke="#a0a0a0" stroke-width="1" stroke-dasharray="8 3"/><path d="M259 186.5 H1354 M275.5 170 V821" stroke="#a6a6a6" stroke-width="1"/><path d="M259 188.5 H275" stroke="#a6a6a6" stroke-width="1"/><path d="M260 178.5 h14 M267.5 171 v14" stroke="#d0d0d0" stroke-width="1"/><path d="M287.5 170 V186" stroke="#a6a6a6" stroke-width="1"/><path d="M306.5 175 V186" stroke="#a6a6a6" stroke-width="1"/><path d="M325.5 170 V186" stroke="#a6a6a6" stroke-width="1"/><path d="M344.5 175 V186" stroke="#a6a6a6" stroke-width="1"/><path d="M363.5 170 V186" stroke="#a6a6a6" stroke-width="1"/><path d="M382.5 175 V186" stroke="#a6a6a6" stroke-width="1"/><path d="M401.5 170 V186" stroke="#a6a6a6" stroke-width="1"/><path d="M420.5 175 V186" stroke="#a6a6a6" stroke-width="1"/><path d="M439.5 170 V186" stroke="#a6a6a6" stroke-width="1"/><path d="M458.5 175 V186" stroke="#a6a6a6" stroke-width="1"/><path d="M477.5 170 V186" stroke="#a6a6a6" stroke-width="1"/><path d="M496.5 175 V186" stroke="#a6a6a6" stroke-width="1"/><path d="M515.5 170 V186" stroke="#a6a6a6" stroke-width="1"/><path d="M534.5 175 V186" stroke="#a6a6a6" stroke-width="1"/><path d="M553.5 170 V186" stroke="#a6a6a6" stroke-width="1"/><path d="M572.5 175 V186" stroke="#a6a6a6" stroke-width="1"/><path d="M591.5 170 V186" stroke="#a6a6a6" stroke-width="1"/><path d="M610.5 175 V186" stroke="#a6a6a6" stroke-width="1"/><path d="M629.5 170 V186" stroke="#a6a6a6" stroke-width="1"/><path d="M648.5 175 V186" stroke="#a6a6a6" stroke-width="1"/><path d="M667.5 170 V186" stroke="#a6a6a6" stroke-width="1"/><path d="M686.5 175 V186" stroke="#a6a6a6" stroke-width="1"/><path d="M705.5 170 V186" stroke="#a6a6a6" stroke-width="1"/><path d="M724.5 175 V186" stroke="#a6a6a6" stroke-width="1"/><path d="M743.5 170 V186" stroke="#a6a6a6" stroke-width="1"/><path d="M762.5 175 V186" stroke="#a6a6a6" stroke-width="1"/><path d="M781.5 170 V186" stroke="#a6a6a6" stroke-width="1"/><path d="M800.5 175 V186" stroke="#a6a6a6" stroke-width="1"/><path d="M819.5 170 V186" stroke="#a6a6a6" stroke-width="1"/><path d="M838.5 175 V186" stroke="#a6a6a6" stroke-width="1"/><path d="M857.5 170 V186" stroke="#a6a6a6" stroke-width="1"/><path d="M876.5 175 V186" stroke="#a6a6a6" stroke-width="1"/><path d="M895.5 170 V186" stroke="#a6a6a6" stroke-width="1"/><path d="M914.5 175 V186" stroke="#a6a6a6" stroke-width="1"/><path d="M933.5 170 V186" stroke="#a6a6a6" stroke-width="1"/><path d="M952.5 175 V186" stroke="#a6a6a6" stroke-width="1"/><path d="M971.5 170 V186" stroke="#a6a6a6" stroke-width="1"/><path d="M990.5 175 V186" stroke="#a6a6a6" stroke-width="1"/><path d="M1009.5 170 V186" stroke="#a6a6a6" stroke-width="1"/><path d="M1028.5 175 V186" stroke="#a6a6a6" stroke-width="1"/><path d="M1047.5 170 V186" stroke="#a6a6a6" stroke-width="1"/><path d="M1066.5 175 V186" stroke="#a6a6a6" stroke-width="1"/><path d="M1085.5 170 V186" stroke="#a6a6a6" stroke-width="1"/><path d="M1104.5 175 V186" stroke="#a6a6a6" stroke-width="1"/><path d="M1123.5 170 V186" stroke="#a6a6a6" stroke-width="1"/><path d="M1142.5 175 V186" stroke="#a6a6a6" stroke-width="1"/><path d="M1161.5 170 V186" stroke="#a6a6a6" stroke-width="1"/><path d="M1180.5 175 V186" stroke="#a6a6a6" stroke-width="1"/><path d="M1199.5 170 V186" stroke="#a6a6a6" stroke-width="1"/><path d="M1218.5 175 V186" stroke="#a6a6a6" stroke-width="1"/><path d="M1237.5 170 V186" stroke="#a6a6a6" stroke-width="1"/><path d="M1256.5 175 V186" stroke="#a6a6a6" stroke-width="1"/><path d="M1275.5 170 V186" stroke="#a6a6a6" stroke-width="1"/><path d="M1294.5 175 V186" stroke="#a6a6a6" stroke-width="1"/><path d="M1313.5 170 V186" stroke="#a6a6a6" stroke-width="1"/><path d="M1332.5 175 V186" stroke="#a6a6a6" stroke-width="1"/><path d="M1351.5 170 V186" stroke="#a6a6a6" stroke-width="1"/><path d="M264 815.5 H275" stroke="#a6a6a6" stroke-width="1"/><path d="M259 796.5 H275" stroke="#a6a6a6" stroke-width="1"/><path d="M264 777.5 H275" stroke="#a6a6a6" stroke-width="1"/><path d="M259 758.5 H275" stroke="#a6a6a6" stroke-width="1"/><path d="M264 739.5 H275" stroke="#a6a6a6" stroke-width="1"/><path d="M259 720.5 H275" stroke="#a6a6a6" stroke-width="1"/><path d="M264 701.5 H275" stroke="#a6a6a6" stroke-width="1"/><path d="M259 682.5 H275" stroke="#a6a6a6" stroke-width="1"/><path d="M264 663.5 H275" stroke="#a6a6a6" stroke-width="1"/><path d="M259 644.5 H275" stroke="#a6a6a6" stroke-width="1"/><path d="M264 625.5 H275" stroke="#a6a6a6" stroke-width="1"/><path d="M259 606.5 H275" stroke="#a6a6a6" stroke-width="1"/><path d="M264 587.5 H275" stroke="#a6a6a6" stroke-width="1"/><path d="M259 568.5 H275" stroke="#a6a6a6" stroke-width="1"/><path d="M264 549.5 H275" stroke="#a6a6a6" stroke-width="1"/><path d="M259 530.5 H275" stroke="#a6a6a6" stroke-width="1"/><path d="M264 511.5 H275" stroke="#a6a6a6" stroke-width="1"/><path d="M259 492.5 H275" stroke="#a6a6a6" stroke-width="1"/><path d="M264 473.5 H275" stroke="#a6a6a6" stroke-width="1"/><path d="M259 454.5 H275" stroke="#a6a6a6" stroke-width="1"/><path d="M264 435.5 H275" stroke="#a6a6a6" stroke-width="1"/><path d="M259 416.5 H275" stroke="#a6a6a6" stroke-width="1"/><path d="M264 397.5 H275" stroke="#a6a6a6" stroke-width="1"/><path d="M259 378.5 H275" stroke="#a6a6a6" stroke-width="1"/><path d="M264 359.5 H275" stroke="#a6a6a6" stroke-width="1"/><path d="M259 340.5 H275" stroke="#a6a6a6" stroke-width="1"/><path d="M264 321.5 H275" stroke="#a6a6a6" stroke-width="1"/><path d="M259 302.5 H275" stroke="#a6a6a6" stroke-width="1"/><path d="M264 283.5 H275" stroke="#a6a6a6" stroke-width="1"/><path d="M259 264.5 H275" stroke="#a6a6a6" stroke-width="1"/><path d="M264 245.5 H275" stroke="#a6a6a6" stroke-width="1"/><path d="M259 226.5 H275" stroke="#a6a6a6" stroke-width="1"/><path d="M264 207.5 H275" stroke="#a6a6a6" stroke-width="1"/><path d="M259 188.5 H275" stroke="#a6a6a6" stroke-width="1"/></svg>
<div class="r" style="left:1354px;top:172px;width:15px;height:649px;background:#dedede"></div>
<div class="r" style="left:1354px;top:172px;width:15px;height:15px;background:#fff;border:1px solid #adadad"></div>
<div class="r" style="left:1354px;top:301px;width:15px;height:432px;background:#fff;border:1px solid #adadad"></div>
<div class="r" style="left:1354px;top:805px;width:15px;height:14px;background:#fff;border:1px solid #adadad"></div>
<div class="r" style="left:276px;top:822px;width:1061px;height:15px;background:#dedede"></div>
<div class="r" style="left:261px;top:822px;width:15px;height:15px;background:#fff;border:1px solid #adadad"></div>
<div class="r" style="left:625px;top:822px;width:366px;height:15px;background:#fff;border:1px solid #adadad"></div>
<div class="r" style="left:1336px;top:822px;width:15px;height:15px;background:#fff;border:1px solid #adadad"></div>
<svg style="left:0px;top:0px" width="1375" height="897" viewBox="0 0 1375 897"><path d="M1357 183 l4.5 -5 l4.5 5z" fill="#666"/><path d="M1357 809 h9 l-4.5 5z" fill="#666"/><path d="M271 825 v9 l-5 -4.5z" fill="#666"/><path d="M1341 825 v9 l5 -4.5z" fill="#666"/><path d="M324.5 848 v18 M391.5 848 v18" stroke="#d8d8d8"/><circle cx="410" cy="856.8" r="7.5" fill="none" stroke="#444" stroke-width="1.2"/><path d="M406 856.8 h8 M410 852.8 v8" stroke="#333" stroke-width="1.8"/><path d="M367 861 l4 -4.5 l4 4.5z" fill="#444"/></svg>
<div class="t" style="left:279px;top:849px;font-size:12px;line-height:14px;color:#3a55a4;"><b>页-1</b></div>
<div class="t" style="left:339px;top:849px;font-size:12px;line-height:14px;color:#444;">全部</div>
<svg style="left:0;top:0" width="1375" height="897"><rect x="413.5" y="288.5" width="273.2" height="72.9" fill="none" stroke="#000" stroke-width="1.2" stroke-dasharray="8.3 3.7"/><rect x="463.4" y="292.5" width="170.3" height="13.1" fill="#fff" stroke="#000" stroke-width="1.2"/><rect x="448.3" y="320.3" width="16.4" height="36.3" fill="#fff" stroke="#000" stroke-width="1.2"/><rect x="494.2" y="320.3" width="17.4" height="36.3" fill="#fff" stroke="#000" stroke-width="1.2"/><rect x="541" y="320.3" width="15.6" height="36.3" fill="#fff" stroke="#000" stroke-width="1.2"/><rect x="588.3" y="320.3" width="16.4" height="36.3" fill="#fff" stroke="#000" stroke-width="1.2"/><rect x="635.2" y="320.3" width="16.5" height="36.3" fill="#fff" stroke="#000" stroke-width="1.2"/><path d="M548.6 305.6 L548.6 312.5" fill="none" stroke="#5b9bd5" stroke-width="1"/><path d="M456.5 312.5 L643.5 312.5" fill="none" stroke="#5b9bd5" stroke-width="1"/><path d="M456.5 312.5 L456.5 320.3" fill="none" stroke="#5b9bd5" stroke-width="1"/><polygon points="456.5 320.3 453.9 315.8 459.1 315.8" fill="#5b9bd5"/><path d="M503 312.5 L503 320.3" fill="none" stroke="#5b9bd5" stroke-width="1"/><polygon points="503 320.3 500.4 315.8 505.6 315.8" fill="#5b9bd5"/><path d="M548.8 312.5 L548.8 320.3" fill="none" stroke="#5b9bd5" stroke-width="1"/><polygon points="548.8 320.3 546.1999999999999 315.8 551.4 315.8" fill="#5b9bd5"/><path d="M596.5 312.5 L596.5 320.3" fill="none" stroke="#5b9bd5" stroke-width="1"/><polygon points="596.5 320.3 593.9 315.8 599.1 315.8" fill="#5b9bd5"/><path d="M643.5 312.5 L643.5 320.3" fill="none" stroke="#5b9bd5" stroke-width="1"/><polygon points="643.5 320.3 640.9 315.8 646.1 315.8" fill="#5b9bd5"/><path d="M550.5 361.4 L550.5 373.7" fill="none" stroke="#5b9bd5" stroke-width="1"/><polygon points="550.5 373.7 547.9 369.2 553.1 369.2" fill="#5b9bd5"/><rect x="413.4" y="373.7" width="273.4" height="63.7" fill="none" stroke="#000" stroke-width="1.2" stroke-dasharray="8.3 3.7"/><rect x="422.5" y="379.5" width="139.1" height="53.9" fill="#fff" stroke="#000" stroke-width="1.2"/><rect x="426.3" y="383.4" width="26.4" height="45.9" fill="#fff" stroke="#000" stroke-width="1.2"/><rect x="467.3" y="383.4" width="89.3" height="12.1" fill="#fff" stroke="#000" stroke-width="1.2"/><rect x="467.3" y="417.3" width="89.3" height="12.3" fill="#fff" stroke="#000" stroke-width="1.2"/><path d="M452.7 406.3 L459 406.3" fill="none" stroke="#5b9bd5" stroke-width="1"/><path d="M459 389.5 L459 423.5" fill="none" stroke="#5b9bd5" stroke-width="1"/><path d="M459 389.5 L467.3 389.5" fill="none" stroke="#5b9bd5" stroke-width="1"/><polygon points="467.3 389.5 462.8 386.9 462.8 392.1" fill="#5b9bd5"/><path d="M459 423.5 L467.3 423.5" fill="none" stroke="#5b9bd5" stroke-width="1"/><polygon points="467.3 423.5 462.8 420.9 462.8 426.1" fill="#5b9bd5"/><rect x="584.3" y="379.5" width="93.5" height="53.9" fill="#fff" stroke="#000" stroke-width="1.2"/><rect x="609.1" y="383.4" width="43.6" height="12.1" fill="#fff" stroke="#000" stroke-width="1.2"/><rect x="598.3" y="417.3" width="28.3" height="12.0" fill="#fff" stroke="#000" stroke-width="1.2"/><rect x="636.2" y="417.3" width="28.4" height="12.0" fill="#fff" stroke="#000" stroke-width="1.2"/><path d="M631.4 395.5 L631.4 402.2" fill="none" stroke="#5b9bd5" stroke-width="1"/><path d="M612.4 402.2 L650.4 402.2" fill="none" stroke="#5b9bd5" stroke-width="1"/><path d="M612.4 402.2 L612.4 417.3" fill="none" stroke="#5b9bd5" stroke-width="1"/><polygon points="612.4 417.3 609.8 412.8 615.0 412.8" fill="#5b9bd5"/><path d="M650.4 402.2 L650.4 417.3" fill="none" stroke="#5b9bd5" stroke-width="1"/><polygon points="650.4 417.3 647.8 412.8 653.0 412.8" fill="#5b9bd5"/><path d="M561.6 406.3 L584.3 406.3" fill="none" stroke="#5b9bd5" stroke-width="1"/><polygon points="584.3 406.3 579.8 403.7 579.8 408.90000000000003" fill="#5b9bd5"/><path d="M550.5 437.4 L550.5 444.4" fill="none" stroke="#5b9bd5" stroke-width="1"/><path d="M444.4 444.4 L724.5 444.4" fill="none" stroke="#5b9bd5" stroke-width="1"/><path d="M444.4 444.4 L444.4 456.4" fill="none" stroke="#5b9bd5" stroke-width="1"/><polygon points="444.4 456.4 441.79999999999995 451.9 447.0 451.9" fill="#5b9bd5"/><path d="M614.4 444.4 L614.4 456.4" fill="none" stroke="#5b9bd5" stroke-width="1"/><polygon points="614.4 456.4 611.8 451.9 617.0 451.9" fill="#5b9bd5"/><path d="M724.5 444.4 L724.5 456.4" fill="none" stroke="#5b9bd5" stroke-width="1"/><polygon points="724.5 456.4 721.9 451.9 727.1 451.9" fill="#5b9bd5"/><rect x="332.8" y="456.4" width="222.9" height="103.1" fill="none" stroke="#000" stroke-width="1.2" stroke-dasharray="8.3 3.7"/><rect x="337.5" y="461.4" width="212.1" height="10.9" fill="#fff" stroke="#000" stroke-width="1.2"/><rect x="337.5" y="478.4" width="49.1" height="75.0" fill="#fff" stroke="#000" stroke-width="1.2"/><rect x="341.3" y="501.3" width="42.2" height="12.2" fill="#fff" stroke="#000" stroke-width="1.2"/><rect x="341.3" y="520.1" width="42.2" height="12.3" fill="#fff" stroke="#000" stroke-width="1.2"/><rect x="398.4" y="478.4" width="71.0" height="75.0" fill="#fff" stroke="#000" stroke-width="1.2"/><rect x="402.5" y="481.5" width="62.0" height="12.0" fill="#fff" stroke="#000" stroke-width="1.2"/><rect x="402.5" y="500.3" width="62.0" height="12.0" fill="#fff" stroke="#000" stroke-width="1.2"/><rect x="402.5" y="519.4" width="62.0" height="12.1" fill="#fff" stroke="#000" stroke-width="1.2"/><rect x="402.5" y="538.3" width="62.0" height="12.3" fill="#fff" stroke="#000" stroke-width="1.2"/><path d="M433.6 493.5 L433.6 500.3" fill="none" stroke="#5b9bd5" stroke-width="1"/><polygon points="433.6 500.3 431.0 495.8 436.20000000000005 495.8" fill="#5b9bd5"/><path d="M433.6 512.3 L433.6 519.4" fill="none" stroke="#5b9bd5" stroke-width="1"/><polygon points="433.6 519.4 431.0 514.9 436.20000000000005 514.9" fill="#5b9bd5"/><path d="M433.6 531.5 L433.6 538.3" fill="none" stroke="#5b9bd5" stroke-width="1"/><polygon points="433.6 538.3 431.0 533.8 436.20000000000005 533.8" fill="#5b9bd5"/><rect x="479.2" y="478.4" width="70.5" height="75.0" fill="#fff" stroke="#000" stroke-width="1.2"/><rect x="483.5" y="481.5" width="61.3" height="18.8" fill="#fff" stroke="#000" stroke-width="1.2"/><rect x="483.5" y="510.5" width="61.3" height="12.2" fill="#fff" stroke="#000" stroke-width="1.2"/><rect x="483.5" y="531.5" width="61.3" height="19.1" fill="#fff" stroke="#000" stroke-width="1.2"/><path d="M514.3 500.3 L514.3 510.5" fill="none" stroke="#5b9bd5" stroke-width="1"/><polygon points="514.3 510.5 511.69999999999993 506.0 516.9 506.0" fill="#5b9bd5"/><path d="M514.3 522.7 L514.3 531.5" fill="none" stroke="#5b9bd5" stroke-width="1"/><polygon points="514.3 531.5 511.69999999999993 527.0 516.9 527.0" fill="#5b9bd5"/><path d="M386.6 515.9 L398.4 515.9" fill="none" stroke="#5b9bd5" stroke-width="1"/><polygon points="398.4 515.9 393.9 513.3 393.9 518.5" fill="#5b9bd5"/><path d="M469.4 515.9 L479.2 515.9" fill="none" stroke="#5b9bd5" stroke-width="1"/><polygon points="479.2 515.9 474.7 513.3 474.7 518.5" fill="#5b9bd5"/><rect x="564.4" y="456.4" width="101.2" height="103.1" fill="none" stroke="#000" stroke-width="1.2" stroke-dasharray="8.3 3.7"/><rect x="570.3" y="461.4" width="89.1" height="10.9" fill="#fff" stroke="#000" stroke-width="1.2"/><rect x="570.3" y="478.4" width="27.4" height="19.1" fill="#fff" stroke="#000" stroke-width="1.2"/><rect x="570.3" y="506.4" width="27.4" height="19.1" fill="#fff" stroke="#000" stroke-width="1.2"/><rect x="570.3" y="534.3" width="27.4" height="19.1" fill="#fff" stroke="#000" stroke-width="1.2"/><path d="M597.7 488.3 L604.3 488.3" fill="none" stroke="#5b9bd5" stroke-width="1"/><path d="M597.7 515.9 L604.3 515.9" fill="none" stroke="#5b9bd5" stroke-width="1"/><path d="M597.7 544.2 L604.3 544.2" fill="none" stroke="#5b9bd5" stroke-width="1"/><path d="M604.3 488.3 L604.3 544.2" fill="none" stroke="#5b9bd5" stroke-width="1"/><path d="M604.3 515.9 L615.1 515.9" fill="none" stroke="#5b9bd5" stroke-width="1"/><polygon points="615.1 515.9 610.6 513.3 610.6 518.5" fill="#5b9bd5"/><rect x="615.1" y="478.4" width="45.7" height="75.0" fill="#fff" stroke="#000" stroke-width="1.2"/><rect x="618.4" y="497.5" width="39.1" height="13.0" fill="#fff" stroke="#000" stroke-width="1.2"/><rect x="618.4" y="518.3" width="39.1" height="19.2" fill="#fff" stroke="#000" stroke-width="1.2"/><rect x="673.5" y="456.4" width="101.1" height="103.1" fill="none" stroke="#000" stroke-width="1.2" stroke-dasharray="8.3 3.7"/><rect x="679.5" y="461.4" width="89.2" height="10.9" fill="#fff" stroke="#000" stroke-width="1.2"/><rect x="679.5" y="478.6" width="54.9" height="11.8" fill="#fff" stroke="#000" stroke-width="1.2"/><rect x="679.5" y="499.6" width="54.9" height="11.7" fill="#fff" stroke="#000" stroke-width="1.2"/><rect x="679.5" y="520.4" width="54.9" height="11.8" fill="#fff" stroke="#000" stroke-width="1.2"/><rect x="679.5" y="541.4" width="54.9" height="12.0" fill="#fff" stroke="#000" stroke-width="1.2"/><path d="M734.4 484.5 L741.5 484.5" fill="none" stroke="#5b9bd5" stroke-width="1"/><path d="M734.4 505.45000000000005 L741.5 505.45000000000005" fill="none" stroke="#5b9bd5" stroke-width="1"/><path d="M734.4 526.3 L741.5 526.3" fill="none" stroke="#5b9bd5" stroke-width="1"/><path d="M734.4 547.4 L741.5 547.4" fill="none" stroke="#5b9bd5" stroke-width="1"/><path d="M741.5 484.5 L741.5 547.4" fill="none" stroke="#5b9bd5" stroke-width="1"/><path d="M741.5 515.9 L749.1 515.9" fill="none" stroke="#5b9bd5" stroke-width="1"/><polygon points="749.1 515.9 744.6 513.3 744.6 518.5" fill="#5b9bd5"/><rect x="749.1" y="478.4" width="20.3" height="75.0" fill="#fff" stroke="#000" stroke-width="1.2"/><path d="M444.4 559.5 L444.4 566.4 L614.5 566.4 L614.5 559.5" fill="none" stroke="#5b9bd5" stroke-width="1"/><path d="M548.6 566.4 L548.6 575.8" fill="none" stroke="#5b9bd5" stroke-width="1"/><polygon points="548.6 575.8 546.0 571.3 551.2 571.3" fill="#5b9bd5"/><rect x="442.8" y="575.8" width="212.0" height="75.4" fill="none" stroke="#000" stroke-width="1.2" stroke-dasharray="8.3 3.7"/><rect x="446.4" y="580.4" width="204.3" height="12.1" fill="#fff" stroke="#000" stroke-width="1.2"/><rect x="446.4" y="597.1" width="50.3" height="19.3" fill="#fff" stroke="#000" stroke-width="1.2"/><rect x="446.4" y="619.6" width="50.3" height="11.8" fill="#fff" stroke="#000" stroke-width="1.2"/><rect x="446.4" y="634.3" width="50.3" height="12.1" fill="#fff" stroke="#000" stroke-width="1.2"/><path d="M496.7 606.7 L503.6 606.7" fill="none" stroke="#5b9bd5" stroke-width="1"/><path d="M496.7 625.5 L503.6 625.5" fill="none" stroke="#5b9bd5" stroke-width="1"/><path d="M496.7 640.3 L503.6 640.3" fill="none" stroke="#5b9bd5" stroke-width="1"/><path d="M503.6 606.7 L503.6 640.3" fill="none" stroke="#5b9bd5" stroke-width="1"/><path d="M503.6 622 L512.2 622" fill="none" stroke="#5b9bd5" stroke-width="1"/><polygon points="512.2 622 507.70000000000005 619.4 507.70000000000005 624.6" fill="#5b9bd5"/><rect x="512.2" y="597.1" width="22.4" height="49.3" fill="#fff" stroke="#000" stroke-width="1.2"/><rect x="546.2" y="597.1" width="16.4" height="49.3" fill="#fff" stroke="#000" stroke-width="1.2"/><rect x="575.4" y="597.1" width="16.3" height="49.3" fill="#fff" stroke="#000" stroke-width="1.2"/><rect x="604.3" y="597.1" width="16.4" height="49.3" fill="#fff" stroke="#000" stroke-width="1.2"/><rect x="634.2" y="597.1" width="16.5" height="49.3" fill="#fff" stroke="#000" stroke-width="1.2"/><path d="M534.6 622 L546.2 622" fill="none" stroke="#5b9bd5" stroke-width="1"/><polygon points="546.2 622 541.7 619.4 541.7 624.6" fill="#5b9bd5"/><path d="M562.6 622 L575.4 622" fill="none" stroke="#5b9bd5" stroke-width="1"/><polygon points="575.4 622 570.9 619.4 570.9 624.6" fill="#5b9bd5"/><path d="M591.7 622 L604.3 622" fill="none" stroke="#5b9bd5" stroke-width="1"/><polygon points="604.3 622 599.8 619.4 599.8 624.6" fill="#5b9bd5"/><path d="M620.7 622 L634.2 622" fill="none" stroke="#5b9bd5" stroke-width="1"/><polygon points="634.2 622 629.7 619.4 629.7 624.6" fill="#5b9bd5"/><path d="M548.6 651.2 L548.6 663.3" fill="none" stroke="#5b9bd5" stroke-width="1"/><polygon points="548.6 663.3 546.0 658.8 551.2 658.8" fill="#5b9bd5"/><rect x="500.6" y="663.3" width="95.1" height="12.1" fill="#fff" stroke="#000" stroke-width="1.2"/><path d="M724.8 559.5 L724.8 613.3" fill="none" stroke="#5b9bd5" stroke-width="1"/><path d="M724.8 613.3 L654.8 613.3" fill="none" stroke="#5b9bd5" stroke-width="1"/><polygon points="654.8 613.3 659.3 610.6999999999999 659.3 615.9" fill="#5b9bd5"/><rect x="674.1" y="616.4" width="50.7" height="11.1" fill="#fff" stroke="#000" stroke-width="1.2"/><rect x="945.6" y="300.6" width="273.2" height="50.8" fill="none" stroke="#000" stroke-width="1.2" stroke-dasharray="8.3 3.7"/><rect x="959.3" y="304.2" width="61.3" height="14.4" fill="#fff" stroke="#000" stroke-width="1.2"/><rect x="1047.4" y="304.2" width="69.3" height="14.4" fill="#fff" stroke="#000" stroke-width="1.2"/><rect x="1144.3" y="304.2" width="69.5" height="14.4" fill="#fff" stroke="#000" stroke-width="1.2"/><path d="M989.3 318.6 L989.3 325.2 L1179.7 325.2 L1179.7 318.6" fill="none" stroke="#5b9bd5" stroke-width="1"/><path d="M1082.5 318.6 L1082.5 335.3" fill="none" stroke="#5b9bd5" stroke-width="1"/><polygon points="1082.5 335.3 1079.9 330.8 1085.1 330.8" fill="#5b9bd5"/><rect x="1030.2" y="335.3" width="103.5" height="13.3" fill="#fff" stroke="#000" stroke-width="1.2"/><path d="M1082.4 351.4 L1082.4 366.4" fill="none" stroke="#5b9bd5" stroke-width="1"/><polygon points="1082.4 366.4 1079.8000000000002 361.9 1085.0 361.9" fill="#5b9bd5"/><rect x="945.6" y="366.3" width="272.9" height="63.0" fill="none" stroke="#000" stroke-width="1.2" stroke-dasharray="8.3 3.7"/><rect x="954.4" y="371.2" width="139.4" height="55.1" fill="#fff" stroke="#000" stroke-width="1.2"/><rect x="958.2" y="376.4" width="26.4" height="45.0" fill="#fff" stroke="#000" stroke-width="1.2"/><rect x="999.4" y="376.4" width="89.2" height="11.1" fill="#fff" stroke="#000" stroke-width="1.2"/><rect x="999.4" y="410.4" width="89.2" height="11.0" fill="#fff" stroke="#000" stroke-width="1.2"/><path d="M984.6 398.4 L991.4 398.4" fill="none" stroke="#5b9bd5" stroke-width="1"/><path d="M991.4 381.9 L991.4 415.9" fill="none" stroke="#5b9bd5" stroke-width="1"/><path d="M991.4 381.9 L999.4 381.9" fill="none" stroke="#5b9bd5" stroke-width="1"/><polygon points="999.4 381.9 994.9 379.29999999999995 994.9 384.5" fill="#5b9bd5"/><path d="M991.4 415.9 L999.4 415.9" fill="none" stroke="#5b9bd5" stroke-width="1"/><polygon points="999.4 415.9 994.9 413.29999999999995 994.9 418.5" fill="#5b9bd5"/><path d="M1093.8 399.3 L1116.2 399.3" fill="none" stroke="#5b9bd5" stroke-width="1"/><polygon points="1116.2 399.3 1111.7 396.7 1111.7 401.90000000000003" fill="#5b9bd5"/><rect x="1116.2" y="371.2" width="93.5" height="55.1" fill="#fff" stroke="#000" stroke-width="1.2"/><rect x="1141.2" y="376.4" width="43.4" height="11.1" fill="#fff" stroke="#000" stroke-width="1.2"/><rect x="1130.3" y="410.4" width="28.4" height="11.0" fill="#fff" stroke="#000" stroke-width="1.2"/><rect x="1168.3" y="410.4" width="28.3" height="11.0" fill="#fff" stroke="#000" stroke-width="1.2"/><path d="M1163.4 387.5 L1163.4 394.6" fill="none" stroke="#5b9bd5" stroke-width="1"/><path d="M1144.4 394.6 L1182.5 394.6" fill="none" stroke="#5b9bd5" stroke-width="1"/><path d="M1144.4 394.6 L1144.4 410.4" fill="none" stroke="#5b9bd5" stroke-width="1"/><polygon points="1144.4 410.4 1141.8000000000002 405.9 1147.0 405.9" fill="#5b9bd5"/><path d="M1182.5 394.6 L1182.5 410.4" fill="none" stroke="#5b9bd5" stroke-width="1"/><polygon points="1182.5 410.4 1179.9 405.9 1185.1 405.9" fill="#5b9bd5"/><path d="M1082.4 429.3 L1082.4 436.5" fill="none" stroke="#5b9bd5" stroke-width="1"/><path d="M976 436.5 L1256.4 436.5" fill="none" stroke="#5b9bd5" stroke-width="1"/><path d="M976 436.5 L976 448.6" fill="none" stroke="#5b9bd5" stroke-width="1"/><polygon points="976 448.6 973.4 444.1 978.6 444.1" fill="#5b9bd5"/><path d="M1146.6 436.5 L1146.6 448.6" fill="none" stroke="#5b9bd5" stroke-width="1"/><polygon points="1146.6 448.6 1144.0 444.1 1149.1999999999998 444.1" fill="#5b9bd5"/><path d="M1256.4 436.5 L1256.4 448.6" fill="none" stroke="#5b9bd5" stroke-width="1"/><polygon points="1256.4 448.6 1253.8000000000002 444.1 1259.0 444.1" fill="#5b9bd5"/><rect x="864.4" y="448.6" width="223.1" height="103.9" fill="none" stroke="#000" stroke-width="1.2" stroke-dasharray="8.3 3.7"/><rect x="869.5" y="453.5" width="212.2" height="11.7" fill="#fff" stroke="#000" stroke-width="1.2"/><rect x="869.5" y="471.3" width="49.3" height="75.1" fill="#fff" stroke="#000" stroke-width="1.2"/><rect x="871.7" y="474.2" width="44.9" height="24.2" fill="#fff" stroke="#000" stroke-width="1.2"/><path d="M894.4 498.4 L894.4 502.2" fill="none" stroke="#5b9bd5" stroke-width="1"/><path d="M880.4 502.2 L908.8 502.2" fill="none" stroke="#5b9bd5" stroke-width="1"/><path d="M880.4 502.2 L880.4 509.4" fill="none" stroke="#5b9bd5" stroke-width="1"/><polygon points="880.4 509.4 877.8 504.9 883.0 504.9" fill="#5b9bd5"/><path d="M908.8 502.2 L908.8 509.4" fill="none" stroke="#5b9bd5" stroke-width="1"/><polygon points="908.8 509.4 906.1999999999999 504.9 911.4 504.9" fill="#5b9bd5"/><rect x="873.4" y="509.4" width="14.2" height="32.9" fill="#fff" stroke="#000" stroke-width="1.2"/><rect x="901.4" y="509.4" width="14.2" height="32.9" fill="#fff" stroke="#000" stroke-width="1.2"/><path d="M918.8 508.7 L930.4 508.7" fill="none" stroke="#5b9bd5" stroke-width="1"/><polygon points="930.4 508.7 925.9 506.09999999999997 925.9 511.3" fill="#5b9bd5"/><rect x="930.4" y="471.3" width="71.1" height="75.1" fill="#fff" stroke="#000" stroke-width="1.2"/><rect x="934.4" y="473.5" width="62.2" height="11.9" fill="#fff" stroke="#000" stroke-width="1.2"/><rect x="934.4" y="492.6" width="62.2" height="12.0" fill="#fff" stroke="#000" stroke-width="1.2"/><rect x="934.4" y="511.6" width="62.2" height="11.9" fill="#fff" stroke="#000" stroke-width="1.2"/><rect x="934.4" y="531.4" width="62.2" height="11.2" fill="#fff" stroke="#000" stroke-width="1.2"/><path d="M965.9 485.4 L965.9 492.6" fill="none" stroke="#5b9bd5" stroke-width="1"/><polygon points="965.9 492.6 963.3 488.1 968.5 488.1" fill="#5b9bd5"/><path d="M965.9 504.6 L965.9 511.6" fill="none" stroke="#5b9bd5" stroke-width="1"/><polygon points="965.9 511.6 963.3 507.1 968.5 507.1" fill="#5b9bd5"/><path d="M965.9 523.5 L965.9 531.4" fill="none" stroke="#5b9bd5" stroke-width="1"/><polygon points="965.9 531.4 963.3 526.9 968.5 526.9" fill="#5b9bd5"/><path d="M1001.5 508.7 L1011.4 508.7" fill="none" stroke="#5b9bd5" stroke-width="1"/><polygon points="1011.4 508.7 1006.9 506.09999999999997 1006.9 511.3" fill="#5b9bd5"/><rect x="1011.4" y="471.3" width="70.3" height="75.1" fill="#fff" stroke="#000" stroke-width="1.2"/><rect x="1015.6" y="473.2" width="61.0" height="19.4" fill="#fff" stroke="#000" stroke-width="1.2"/><rect x="1015.6" y="503.5" width="61.0" height="11.0" fill="#fff" stroke="#000" stroke-width="1.2"/><rect x="1015.6" y="523.2" width="61.0" height="19.4" fill="#fff" stroke="#000" stroke-width="1.2"/><path d="M1046 492.6 L1046 503.5" fill="none" stroke="#5b9bd5" stroke-width="1"/><polygon points="1046 503.5 1043.4 499.0 1048.6 499.0" fill="#5b9bd5"/><path d="M1046 514.5 L1046 523.2" fill="none" stroke="#5b9bd5" stroke-width="1"/><polygon points="1046 523.2 1043.4 518.7 1048.6 518.7" fill="#5b9bd5"/><rect x="1096.4" y="448.6" width="101.2" height="103.9" fill="none" stroke="#000" stroke-width="1.2" stroke-dasharray="8.3 3.7"/><rect x="1102.5" y="453.5" width="89.0" height="11.7" fill="#fff" stroke="#000" stroke-width="1.2"/><rect x="1102.5" y="471.3" width="27.0" height="19.3" fill="#fff" stroke="#000" stroke-width="1.2"/><rect x="1102.5" y="499.6" width="27.0" height="18.8" fill="#fff" stroke="#000" stroke-width="1.2"/><rect x="1102.5" y="527.4" width="27.0" height="19.0" fill="#fff" stroke="#000" stroke-width="1.2"/><path d="M1129.5 480.3 L1136.3 480.3" fill="none" stroke="#5b9bd5" stroke-width="1"/><path d="M1129.5 508.7 L1136.3 508.7" fill="none" stroke="#5b9bd5" stroke-width="1"/><path d="M1129.5 536.5 L1136.3 536.5" fill="none" stroke="#5b9bd5" stroke-width="1"/><path d="M1136.3 480.3 L1136.3 536.5" fill="none" stroke="#5b9bd5" stroke-width="1"/><path d="M1136.3 508.7 L1147.6 508.7" fill="none" stroke="#5b9bd5" stroke-width="1"/><polygon points="1147.6 508.7 1143.1 506.09999999999997 1143.1 511.3" fill="#5b9bd5"/><rect x="1147.6" y="471.3" width="45.1" height="75.1" fill="#fff" stroke="#000" stroke-width="1.2"/><rect x="1150.2" y="489.1" width="39.4" height="14.4" fill="#fff" stroke="#000" stroke-width="1.2"/><rect x="1150.2" y="510.1" width="39.4" height="19.6" fill="#fff" stroke="#000" stroke-width="1.2"/><rect x="1205.6" y="448.6" width="101.1" height="103.9" fill="none" stroke="#000" stroke-width="1.2" stroke-dasharray="8.3 3.7"/><rect x="1211.4" y="453.5" width="89.1" height="11.7" fill="#fff" stroke="#000" stroke-width="1.2"/><rect x="1211.4" y="471.6" width="54.3" height="10.9" fill="#fff" stroke="#000" stroke-width="1.2"/><rect x="1211.4" y="492.6" width="54.3" height="10.9" fill="#fff" stroke="#000" stroke-width="1.2"/><rect x="1211.4" y="513.6" width="54.3" height="11.8" fill="#fff" stroke="#000" stroke-width="1.2"/><rect x="1211.4" y="534.3" width="54.3" height="12.1" fill="#fff" stroke="#000" stroke-width="1.2"/><path d="M1265.7 477.05 L1273.1 477.05" fill="none" stroke="#5b9bd5" stroke-width="1"/><path d="M1265.7 498.05 L1273.1 498.05" fill="none" stroke="#5b9bd5" stroke-width="1"/><path d="M1265.7 519.5 L1273.1 519.5" fill="none" stroke="#5b9bd5" stroke-width="1"/><path d="M1265.7 540.3499999999999 L1273.1 540.3499999999999" fill="none" stroke="#5b9bd5" stroke-width="1"/><path d="M1273.1 477.05 L1273.1 540.3499999999999" fill="none" stroke="#5b9bd5" stroke-width="1"/><path d="M1273.1 508.7 L1281.4 508.7" fill="none" stroke="#5b9bd5" stroke-width="1"/><polygon points="1281.4 508.7 1276.9 506.09999999999997 1276.9 511.3" fill="#5b9bd5"/><rect x="1281.4" y="470.3" width="20.3" height="75.2" fill="#fff" stroke="#000" stroke-width="1.2"/><path d="M976.2 552.5 L976.2 559.5 L1146.4 559.5 L1146.4 552.5" fill="none" stroke="#5b9bd5" stroke-width="1"/><path d="M1080.4 559.5 L1080.4 568.1" fill="none" stroke="#5b9bd5" stroke-width="1"/><polygon points="1080.4 568.1 1077.8000000000002 563.6 1083.0 563.6" fill="#5b9bd5"/><rect x="974.5" y="568.1" width="212.2" height="75.3" fill="none" stroke="#000" stroke-width="1.2" stroke-dasharray="8.3 3.7"/><rect x="978.5" y="572.3" width="204.0" height="11.9" fill="#fff" stroke="#000" stroke-width="1.2"/><rect x="978.5" y="590.4" width="49.9" height="18.8" fill="#fff" stroke="#000" stroke-width="1.2"/><rect x="978.5" y="612.7" width="49.9" height="10.8" fill="#fff" stroke="#000" stroke-width="1.2"/><rect x="978.5" y="626.3" width="49.9" height="11.9" fill="#fff" stroke="#000" stroke-width="1.2"/><path d="M1028.4 599.8 L1035.4 599.8" fill="none" stroke="#5b9bd5" stroke-width="1"/><path d="M1028.4 618.1 L1035.4 618.1" fill="none" stroke="#5b9bd5" stroke-width="1"/><path d="M1028.4 632.2 L1035.4 632.2" fill="none" stroke="#5b9bd5" stroke-width="1"/><path d="M1035.4 599.8 L1035.4 632.2" fill="none" stroke="#5b9bd5" stroke-width="1"/><path d="M1035.4 614.4 L1044 614.4" fill="none" stroke="#5b9bd5" stroke-width="1"/><polygon points="1044 614.4 1039.5 611.8 1039.5 617.0" fill="#5b9bd5"/><rect x="1044" y="590.4" width="22.5" height="48.1" fill="#fff" stroke="#000" stroke-width="1.2"/><rect x="1078.2" y="589.5" width="16.5" height="49.7" fill="#fff" stroke="#000" stroke-width="1.2"/><rect x="1107.4" y="589.4" width="16.3" height="49.8" fill="#fff" stroke="#000" stroke-width="1.2"/><rect x="1136.2" y="589.4" width="16.3" height="49.8" fill="#fff" stroke="#000" stroke-width="1.2"/><rect x="1166.5" y="589.4" width="16.1" height="49.8" fill="#fff" stroke="#000" stroke-width="1.2"/><path d="M1066.5 614.4 L1078.2 614.4" fill="none" stroke="#5b9bd5" stroke-width="1"/><polygon points="1078.2 614.4 1073.7 611.8 1073.7 617.0" fill="#5b9bd5"/><path d="M1094.7 614.4 L1107.4 614.4" fill="none" stroke="#5b9bd5" stroke-width="1"/><polygon points="1107.4 614.4 1102.9 611.8 1102.9 617.0" fill="#5b9bd5"/><path d="M1123.7 614.4 L1136.2 614.4" fill="none" stroke="#5b9bd5" stroke-width="1"/><polygon points="1136.2 614.4 1131.7 611.8 1131.7 617.0" fill="#5b9bd5"/><path d="M1152.5 614.4 L1166.5 614.4" fill="none" stroke="#5b9bd5" stroke-width="1"/><polygon points="1166.5 614.4 1162.0 611.8 1162.0 617.0" fill="#5b9bd5"/><path d="M1080.4 643.4 L1080.4 655.5" fill="none" stroke="#5b9bd5" stroke-width="1"/><polygon points="1080.4 655.5 1077.8000000000002 651.0 1083.0 651.0" fill="#5b9bd5"/><rect x="1032.3" y="655.5" width="95.2" height="12.0" fill="#fff" stroke="#000" stroke-width="1.2"/><path d="M1256.5 552.5 L1256.5 614.4" fill="none" stroke="#5b9bd5" stroke-width="1"/><path d="M1256.5 614.4 L1186.7 614.4" fill="none" stroke="#5b9bd5" stroke-width="1"/><polygon points="1186.7 614.4 1191.2 611.8 1191.2 617.0" fill="#5b9bd5"/><rect x="1202.4" y="599.5" width="49.2" height="11.8" fill="#fff" stroke="#000" stroke-width="1.2"/></svg>
<style>.dt{position:absolute;display:flex;align-items:center;justify-content:center;text-align:center;color:#000;white-space:nowrap;letter-spacing:-0.35px;font-weight:bold;will-change:transform}</style>
<div class="dt" style="left:463.4px;top:292.5px;width:170.3px;height:13.1px;font-size:7px;line-height:9px">冬奥背景下山地滑雪度假区选址研究——以XXX为例</div><div class="dt" style="left:438.4px;top:330.3px;width:36.3px;height:16.4px;font-size:7px;line-height:9.5px;font-weight:normal;letter-spacing:0;-webkit-text-stroke:0.2px #000;transform:rotate(90deg)">研究背景</div><div class="dt" style="left:484.8px;top:329.8px;width:36.3px;height:17.4px;font-size:7px;line-height:9.5px;font-weight:normal;letter-spacing:0;-webkit-text-stroke:0.2px #000;transform:rotate(90deg)">研究目的<br>与意义</div><div class="dt" style="left:530.6px;top:330.7px;width:36.3px;height:15.6px;font-size:7px;line-height:9.5px;font-weight:normal;letter-spacing:0;-webkit-text-stroke:0.2px #000;transform:rotate(90deg)">研究对象</div><div class="dt" style="left:578.4px;top:330.2px;width:36.3px;height:16.4px;font-size:7px;line-height:9.5px;font-weight:normal;letter-spacing:0;-webkit-text-stroke:0.2px #000;transform:rotate(90deg)">文献综述</div><div class="dt" style="left:625.3px;top:330.2px;width:36.3px;height:16.5px;font-size:7px;line-height:9.5px;font-weight:normal;letter-spacing:0;-webkit-text-stroke:0.2px #000;transform:rotate(90deg)">研究内容<br>与方法</div><div class="dt" style="left:416.5px;top:393.2px;width:45.9px;height:26.4px;font-size:7px;line-height:9.5px;font-weight:normal;letter-spacing:0;-webkit-text-stroke:0.2px #000;transform:rotate(90deg)">山地滑雪度假<br>区选址影响因<br>素研究</div><div class="dt" style="left:467.3px;top:383.4px;width:89.3px;height:12.1px;font-size:7px;line-height:9px">自然因素—场地适宜性分析</div><div class="dt" style="left:467.3px;top:417.3px;width:89.3px;height:12.3px;font-size:7px;line-height:9px">人文因素—多因素综合分析</div><div class="dt" style="left:609.1px;top:383.4px;width:43.6px;height:12.1px;font-size:7px;line-height:9px">分析方法</div><div class="dt" style="left:598.3px;top:417.3px;width:28.3px;height:12.0px;font-size:7px;line-height:9px">GIS法</div><div class="dt" style="left:636.2px;top:417.3px;width:28.4px;height:12.0px;font-size:7px;line-height:9px">AHP法</div><div class="dt" style="left:337.5px;top:461.4px;width:212.1px;height:10.9px;font-size:7px;line-height:9px">自然因素—场地适宜性分析</div><div class="dt" style="left:341.3px;top:501.3px;width:42.2px;height:12.2px;font-size:7px;line-height:9px">户外区</div><div class="dt" style="left:341.3px;top:520.1px;width:42.2px;height:12.3px;font-size:7px;line-height:9px">户内区</div><div class="dt" style="left:402.5px;top:481.5px;width:62.0px;height:12.0px;font-size:7px;line-height:9px">建立评价指标体系</div><div class="dt" style="left:402.5px;top:500.3px;width:62.0px;height:12.0px;font-size:7px;line-height:9px">AHP权重赋值</div><div class="dt" style="left:402.5px;top:519.4px;width:62.0px;height:12.1px;font-size:7px;line-height:9px">GIS技术空间分析</div><div class="dt" style="left:402.5px;top:538.3px;width:62.0px;height:12.3px;font-size:7px;line-height:9px">场地适宜性评价图</div><div class="dt" style="left:483.5px;top:481.5px;width:61.3px;height:18.8px;font-size:7px;line-height:9px">户外区与户内区空<br>间关系研究</div><div class="dt" style="left:483.5px;top:510.5px;width:61.3px;height:12.2px;font-size:7px;line-height:9px">GIS技术空间分析</div><div class="dt" style="left:483.5px;top:531.5px;width:61.3px;height:19.1px;font-size:7px;line-height:9px">山地滑雪度假区选<br>址范围</div><div class="dt" style="left:570.3px;top:461.4px;width:89.1px;height:10.9px;font-size:7px;line-height:9px">人文因素—市场因素分析</div><div class="dt" style="left:570.3px;top:478.4px;width:27.4px;height:19.1px;font-size:7px;line-height:9px">区域旅<br>游市场</div><div class="dt" style="left:570.3px;top:506.4px;width:27.4px;height:19.1px;font-size:7px;line-height:9px">休闲度<br>假市场</div><div class="dt" style="left:570.3px;top:534.3px;width:27.4px;height:19.1px;font-size:7px;line-height:9px">客源<br>市场</div><div class="dt" style="left:618.4px;top:497.5px;width:39.1px;height:13.0px;font-size:7px;line-height:9px">游客量预测</div><div class="dt" style="left:618.4px;top:518.3px;width:39.1px;height:19.2px;font-size:7px;line-height:9px">游客度假<br>需求</div><div class="dt" style="left:679.5px;top:461.4px;width:89.2px;height:10.9px;font-size:7px;line-height:9px">人文因素—其他因素分析</div><div class="dt" style="left:679.5px;top:478.6px;width:54.9px;height:11.8px;font-size:7px;line-height:9px">资源与环境因素</div><div class="dt" style="left:679.5px;top:499.6px;width:54.9px;height:11.7px;font-size:7px;line-height:9px">区位因素</div><div class="dt" style="left:679.5px;top:520.4px;width:54.9px;height:11.8px;font-size:7px;line-height:9px">社会经济因素</div><div class="dt" style="left:679.5px;top:541.4px;width:54.9px;height:12.0px;font-size:7px;line-height:9px">政策环境因素</div><div class="dt" style="left:721.8px;top:505.8px;width:75.0px;height:20.3px;font-size:7px;line-height:9.5px;font-weight:normal;letter-spacing:0;-webkit-text-stroke:0.2px #000;transform:rotate(90deg)">山地滑雪度假区选址<br>外部条件分析</div><div class="dt" style="left:446.4px;top:580.4px;width:204.3px;height:12.1px;font-size:7px;line-height:9px">综合分析及专家决策</div><div class="dt" style="left:446.4px;top:597.1px;width:50.3px;height:19.3px;font-size:7px;line-height:9px">山地滑雪度假<br>区选址范围</div><div class="dt" style="left:446.4px;top:619.6px;width:50.3px;height:11.8px;font-size:7px;line-height:9px">游客量预测</div><div class="dt" style="left:446.4px;top:634.3px;width:50.3px;height:12.1px;font-size:7px;line-height:9px">游客度假需求</div><div class="dt" style="left:498.8px;top:610.5px;width:49.3px;height:22.4px;font-size:7px;line-height:9.5px;font-weight:normal;letter-spacing:0;-webkit-text-stroke:0.2px #000;transform:rotate(90deg)">山地滑雪度假<br>区选址点</div><div class="dt" style="left:529.8px;top:613.5px;width:49.3px;height:16.4px;font-size:7px;line-height:9.5px;font-weight:normal;letter-spacing:0;-webkit-text-stroke:0.2px #000;transform:rotate(90deg)">建立评价<br>指标体系</div><div class="dt" style="left:558.9px;top:613.6px;width:49.3px;height:16.3px;font-size:7px;line-height:9.5px;font-weight:normal;letter-spacing:0;-webkit-text-stroke:0.2px #000;transform:rotate(90deg)">AHP权重赋值</div><div class="dt" style="left:587.9px;top:613.5px;width:49.3px;height:16.4px;font-size:7px;line-height:9.5px;font-weight:normal;letter-spacing:0;-webkit-text-stroke:0.2px #000;transform:rotate(90deg)">选址范围<br>的划分</div><div class="dt" style="left:617.8px;top:613.5px;width:49.3px;height:16.5px;font-size:7px;line-height:9.5px;font-weight:normal;letter-spacing:0;-webkit-text-stroke:0.2px #000;transform:rotate(90deg)">示范建设建议</div><div class="dt" style="left:500.6px;top:663.3px;width:95.1px;height:12.1px;font-size:7px;line-height:9px">结论与展望</div><div class="dt" style="left:674.1px;top:616.4px;width:50.7px;height:11.1px;font-size:7px;line-height:9px">指标体系支撑</div><div class="dt" style="left:959.3px;top:304.2px;width:61.3px;height:14.4px;font-size:7px;line-height:9px">2022年冬奥会</div><div class="dt" style="left:1047.4px;top:304.2px;width:69.3px;height:14.4px;font-size:7px;line-height:9px">自然资源的开发利用</div><div class="dt" style="left:1144.3px;top:304.2px;width:69.5px;height:14.4px;font-size:7px;line-height:9px">城市休闲功能</div><div class="dt" style="left:1030.2px;top:335.3px;width:103.5px;height:13.3px;font-size:7px;line-height:9px">国内外选址研究的相关文献研究</div><div class="dt" style="left:948.9px;top:385.7px;width:45.0px;height:26.4px;font-size:7px;line-height:9.5px;font-weight:normal;letter-spacing:0;-webkit-text-stroke:0.2px #000;transform:rotate(90deg)">山地滑雪旅游<br>度假区选址影<br>响因素研究</div><div class="dt" style="left:999.4px;top:376.4px;width:89.2px;height:11.1px;font-size:7px;line-height:9px">自然因素—供给侧分析</div><div class="dt" style="left:999.4px;top:410.4px;width:89.2px;height:11.0px;font-size:7px;line-height:9px">人文因素—需求侧分析</div><div class="dt" style="left:1141.2px;top:376.4px;width:43.4px;height:11.1px;font-size:7px;line-height:9px">分析方法</div><div class="dt" style="left:1130.3px;top:410.4px;width:28.4px;height:11.0px;font-size:7px;line-height:9px">GIS法</div><div class="dt" style="left:1168.3px;top:410.4px;width:28.3px;height:11.0px;font-size:7px;line-height:9px">AHP法</div><div class="dt" style="left:869.5px;top:453.5px;width:212.2px;height:11.7px;font-size:7px;line-height:9px">自然因素—场地适宜性分析</div><div class="dt" style="left:871.7px;top:474.2px;width:44.9px;height:24.2px;font-size:7px;line-height:9px">山地滑雪旅<br>游度假区<br>功能研究</div><div class="dt" style="left:873.4px;top:509.4px;width:14.2px;height:32.9px;font-size:7px;line-height:9px">户<br>外<br>区</div><div class="dt" style="left:901.4px;top:509.4px;width:14.2px;height:32.9px;font-size:7px;line-height:9px">室<br>内<br>区</div><div class="dt" style="left:934.4px;top:473.5px;width:62.2px;height:11.9px;font-size:7px;line-height:9px">建立评价指标体系</div><div class="dt" style="left:934.4px;top:492.6px;width:62.2px;height:12.0px;font-size:7px;line-height:9px">AHP权重赋值</div><div class="dt" style="left:934.4px;top:511.6px;width:62.2px;height:11.9px;font-size:7px;line-height:9px">GIS空间分析</div><div class="dt" style="left:934.4px;top:531.4px;width:62.2px;height:11.2px;font-size:7px;line-height:9px">场地适宜性评价图</div><div class="dt" style="left:1015.6px;top:473.2px;width:61.0px;height:19.4px;font-size:7px;line-height:9px">户外区与室内区空<br>间关系研究</div><div class="dt" style="left:1015.6px;top:503.5px;width:61.0px;height:11.0px;font-size:7px;line-height:9px">GIS空间分析</div><div class="dt" style="left:1015.6px;top:523.2px;width:61.0px;height:19.4px;font-size:7px;line-height:9px">山地滑雪旅游度假<br>区选址范围</div><div class="dt" style="left:1102.5px;top:453.5px;width:89.0px;height:11.7px;font-size:7px;line-height:9px">人文因素—市场因素分析</div><div class="dt" style="left:1102.5px;top:471.3px;width:27.0px;height:19.3px;font-size:7px;line-height:9px">区域旅<br>游市场</div><div class="dt" style="left:1102.5px;top:499.6px;width:27.0px;height:18.8px;font-size:7px;line-height:9px">休闲度<br>假市场</div><div class="dt" style="left:1102.5px;top:527.4px;width:27.0px;height:19.0px;font-size:7px;line-height:9px">客源<br>市场</div><div class="dt" style="left:1150.2px;top:489.1px;width:39.4px;height:14.4px;font-size:7px;line-height:9px">游客量预测</div><div class="dt" style="left:1150.2px;top:510.1px;width:39.4px;height:19.6px;font-size:7px;line-height:9px">游客度假<br>需求</div><div class="dt" style="left:1211.4px;top:453.5px;width:89.1px;height:11.7px;font-size:7px;line-height:9px">人文因素—其他因素分析</div><div class="dt" style="left:1211.4px;top:471.6px;width:54.3px;height:10.9px;font-size:7px;line-height:9px">资源与环境因素</div><div class="dt" style="left:1211.4px;top:492.6px;width:54.3px;height:10.9px;font-size:7px;line-height:9px">区位因素</div><div class="dt" style="left:1211.4px;top:513.6px;width:54.3px;height:11.8px;font-size:7px;line-height:9px">社会经济因素</div><div class="dt" style="left:1211.4px;top:534.3px;width:54.3px;height:12.1px;font-size:7px;line-height:9px">政策环境因素</div><div class="dt" style="left:1254.0px;top:497.8px;width:75.2px;height:20.3px;font-size:7px;line-height:9.5px;font-weight:normal;letter-spacing:0;-webkit-text-stroke:0.2px #000;transform:rotate(90deg)">山地滑雪旅游度假区选<br>址外部条件分析</div><div class="dt" style="left:978.5px;top:572.3px;width:204.0px;height:11.9px;font-size:7px;line-height:9px">综合分析及专家决策</div><div class="dt" style="left:978.5px;top:590.4px;width:49.9px;height:18.8px;font-size:7px;line-height:9px">山地滑雪度假<br>区选址范围</div><div class="dt" style="left:978.5px;top:612.7px;width:49.9px;height:10.8px;font-size:7px;line-height:9px">游客量预测</div><div class="dt" style="left:978.5px;top:626.3px;width:49.9px;height:11.9px;font-size:7px;line-height:9px">游客度假需求</div><div class="dt" style="left:1031.2px;top:603.2px;width:48.1px;height:22.5px;font-size:7px;line-height:9.5px;font-weight:normal;letter-spacing:0;-webkit-text-stroke:0.2px #000;transform:rotate(90deg)">山地滑雪度假<br>区选址点</div><div class="dt" style="left:1061.6px;top:606.1px;width:49.7px;height:16.5px;font-size:7px;line-height:9.5px;font-weight:normal;letter-spacing:0;-webkit-text-stroke:0.2px #000;transform:rotate(90deg)">建立评价<br>指标体系</div><div class="dt" style="left:1090.7px;top:606.1px;width:49.8px;height:16.3px;font-size:7px;line-height:9.5px;font-weight:normal;letter-spacing:0;-webkit-text-stroke:0.2px #000;transform:rotate(90deg)">AHP权重赋值</div><div class="dt" style="left:1119.4px;top:606.1px;width:49.8px;height:16.3px;font-size:7px;line-height:9.5px;font-weight:normal;letter-spacing:0;-webkit-text-stroke:0.2px #000;transform:rotate(90deg)">选址范围<br>的划分</div><div class="dt" style="left:1149.6px;top:606.2px;width:49.8px;height:16.1px;font-size:7px;line-height:9.5px;font-weight:normal;letter-spacing:0;-webkit-text-stroke:0.2px #000;transform:rotate(90deg)">示范建设建议</div><div class="dt" style="left:1032.3px;top:655.5px;width:95.2px;height:12.0px;font-size:7px;line-height:9px">结论与展望</div><div class="dt" style="left:1202.4px;top:599.5px;width:49.2px;height:11.8px;font-size:7px;line-height:9px">指标体系支撑</div>
<div class="r" style="left:0px;top:876px;width:1375px;height:21px;background:#f1f1f1;border-top:1px solid #c6c6c6"></div>
<div class="t" style="left:4px;top:878px;font-size:12px;line-height:14px;color:#444;">页面 1/1</div>
<div class="t" style="left:70px;top:878px;font-size:12px;line-height:14px;color:#444;">中文(中国)</div>
<div class="r" style="left:1104px;top:877px;width:38px;height:20px;background:#b9b9b9"></div>
<svg style="left:0px;top:0px" width="1375" height="897" viewBox="0 0 1375 897"><circle cx="149" cy="883" r="2" fill="#777"/><rect x="152" y="881" width="6" height="3" fill="#777"/><path d="M148.5 885.5 h10 v7 h-10z M148.5 888.5 h10 M152 885.5 v7 M155 885.5 v7" fill="none" stroke="#888" stroke-width="1"/><path d="M1116 881.5 h12 v4 h-12z" fill="none" stroke="#5a5a5a" stroke-width="1.2"/><path d="M1122 886 v6 M1119 892.5 h6" stroke="#5a5a5a" stroke-width="1.2"/><path d="M1147 886.5 h6" stroke="#555" stroke-width="1.6"/><path d="M1157 886.5 h100" stroke="#a8a8a8" stroke-width="1"/><rect x="1180" y="879" width="3.5" height="13" fill="#555"/><path d="M1207.5 883 v7" stroke="#a8a8a8"/><path d="M1261 886.5 h8 M1265 882.5 v8" stroke="#555" stroke-width="1.6"/><rect x="1323.5" y="880.5" width="13" height="12" fill="none" stroke="#666"/><path d="M1330 882 v9 M1325 886.5 h10" stroke="#888" stroke-width=".8" stroke-dasharray="1.5 1"/><path d="M1351.5 880.5 h6 v4 h-6z M1359.5 880.5 h5 v3 M1351.5 887.5 v5 h8 v-6 h-4" fill="none" stroke="#666"/></svg>
<div class="t" style="left:1284px;top:878px;font-size:12px;line-height:14px;color:#444;">50%</div>
</body></html>
